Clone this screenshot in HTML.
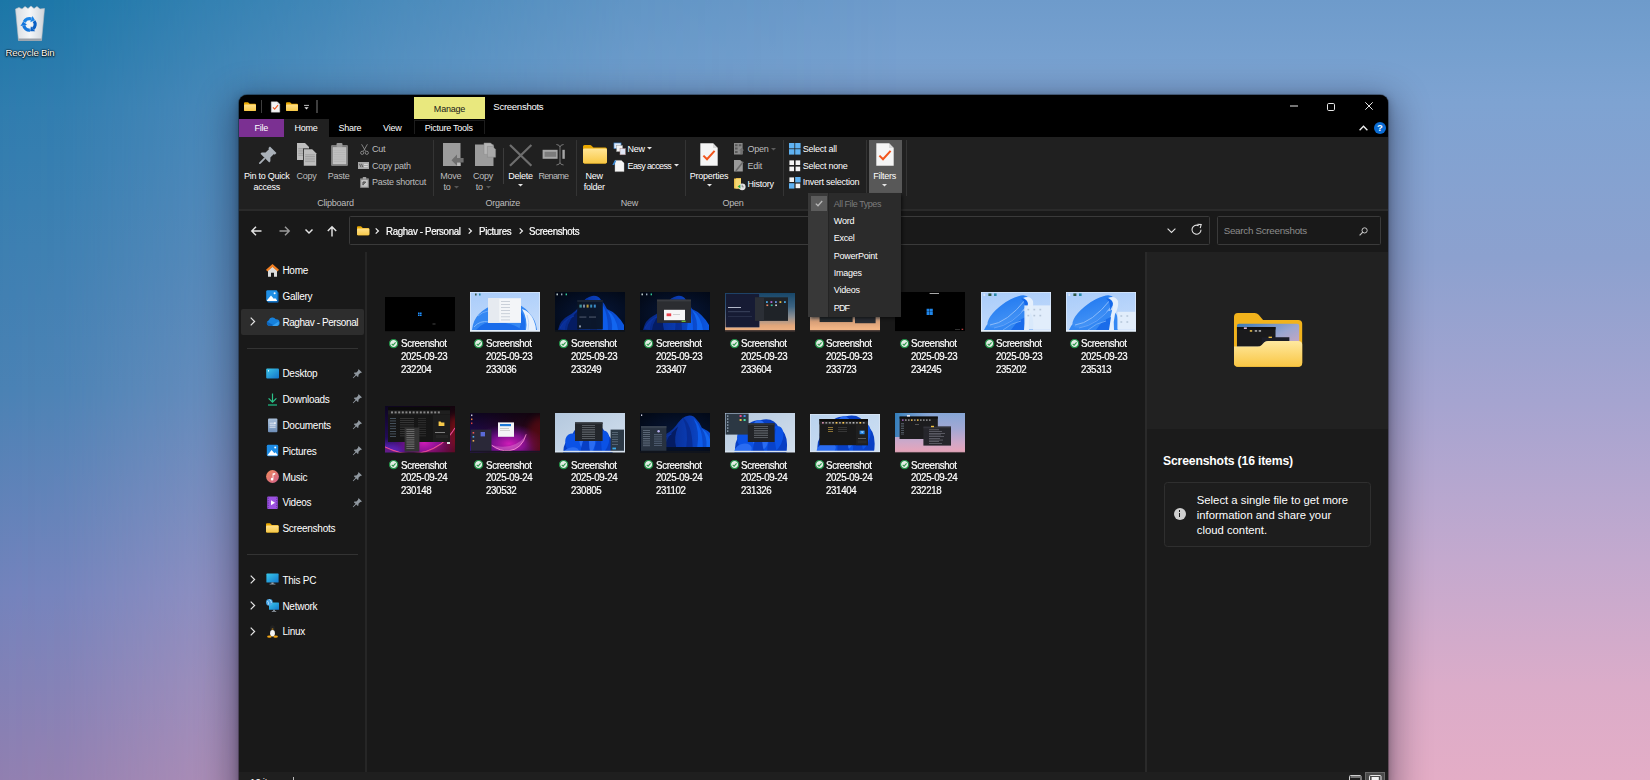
<!DOCTYPE html><html><head><meta charset="utf-8"><title>Screenshots</title><style>
*{margin:0;padding:0;box-sizing:border-box}
html,body{width:1650px;height:780px;overflow:hidden}
body{position:relative;font-family:"Liberation Sans",sans-serif;color:#fff;
 background:linear-gradient(180deg,#6e9bcb 0%,#76a0cf 7%,#7ea3d2 13%,#8ca1cf 33%,#a6a4d0 52%,#c4a9ce 72%,#dbacc9 88%,#e4adc6 100%);
}
.abs,.t{position:absolute}
.t{white-space:nowrap;line-height:12px;margin-top:-6px;font-size:9px;letter-spacing:-.25px;color:#fff}
.c{transform:translateX(-50%);text-align:center}
.g{color:#bdbdbd}
.n{font-size:9.8px;letter-spacing:-.28px}
.np{font-size:10px;letter-spacing:-.25px}
.cap{font-size:11px;letter-spacing:-.4px;margin-top:-6.2px;transform:scaleX(.885);transform-origin:0 50%;-webkit-text-stroke:.22px #fff}
svg{position:absolute;overflow:visible}
#lov{position:absolute;left:0;top:0;width:900px;height:780px;background:linear-gradient(180deg,#1b76a7 0,#2f7cae 14%,#4a82b4 50%,#7383bc 76%,#917fb0 100%);-webkit-mask-image:linear-gradient(90deg,#000 0,rgba(0,0,0,.96) 7%,rgba(0,0,0,.72) 22%,rgba(0,0,0,.42) 45%,rgba(0,0,0,.15) 70%,transparent 100%);mask-image:linear-gradient(90deg,#000 0,rgba(0,0,0,.96) 7%,rgba(0,0,0,.72) 22%,rgba(0,0,0,.42) 45%,rgba(0,0,0,.15) 70%,transparent 100%)}
#win{position:absolute;left:239px;top:95px;width:1149px;height:700px;background:#191919;border-radius:8px 8px 0 0;
 box-shadow:0 0 0 1px rgba(0,0,0,.3),0 10px 34px 8px rgba(0,0,25,.36),0 2px 10px rgba(0,0,0,.3)}
</style></head><body>
<div id="lov"></div>
<svg style="left:14px;top:5px" width="32" height="37" viewBox="0 0 32 37">
<defs><linearGradient id="rb" x1="0" x2="1"><stop offset="0" stop-color="#d9dde2"/><stop offset=".5" stop-color="#f4f6f8"/><stop offset="1" stop-color="#cfd4da"/></linearGradient></defs>
<path d="M1.5 4 L5 2.5 L8 4 L11 1.5 L14 3.5 L17 1 L20 3.5 L23 1.5 L26 4 L30.5 3.5 L27.5 35.5 L4.5 35.5 Z" fill="url(#rb)" stroke="#b9bec5" stroke-width=".6"/>
<path d="M4.3 33.5 L27.7 33.5 L27.5 35.8 L4.5 35.8 Z" fill="#9aa0a8"/>
<g transform="translate(15.4 19.4)"><g transform="rotate(10)"><path d="M-5.51 -1.48 A5.70 5.70 0 0 1 0.99 -5.61" fill="none" stroke="#1b84e6" stroke-width="3.3"/><path d="M1.56 -8.86 L0.42 -2.36 L4.83 -4.94 Z" fill="#1b84e6"/></g><g transform="rotate(130)"><path d="M-5.51 -1.48 A5.70 5.70 0 0 1 0.99 -5.61" fill="none" stroke="#0a5fc4" stroke-width="3.3"/><path d="M1.56 -8.86 L0.42 -2.36 L4.83 -4.94 Z" fill="#0a5fc4"/></g><g transform="rotate(250)"><path d="M-5.51 -1.48 A5.70 5.70 0 0 1 0.99 -5.61" fill="none" stroke="#1476dc" stroke-width="3.3"/><path d="M1.56 -8.86 L0.42 -2.36 L4.83 -4.94 Z" fill="#1476dc"/></g></g>
</svg>
<div class="t" style="left:5.5px;top:52.5px;font-size:9.6px;letter-spacing:-.15px;text-shadow:0 1px 2px #000,0 0 2px #000,0 0 1px #000">Recycle Bin</div>
<div id="win"></div>
<div class="abs" style="left:239px;top:95px;width:1149px;height:42px;background:#000;border-radius:8px 8px 0 0"></div>
<svg style="left:244px;top:102px" width="12" height="9" viewBox="0 0 12 9"><defs><linearGradient id="fga" x1="0" y1="0" x2="0" y2="1"><stop offset="0" stop-color="#ffe08a"/><stop offset="1" stop-color="#f7c948"/></linearGradient></defs>
<path d="M0 1.2 Q0 .2 1 .2 L3.6 .2 Q4.2 .2 4.7 .8 L5.6 1.8 L11 1.8 Q12 1.8 12 2.8 L12 8 Q12 9 11 9 L1 9 Q0 9 0 8 Z" fill="#e9a800"/>
<path d="M0 3.2 Q0 2.4 1 2.4 L11 2.4 Q12 2.4 12 3.2 L12 8 Q12 9 11 9 L1 9 Q0 9 0 8 Z" fill="url(#fga)"/></svg>
<div class="abs" style="left:260.6px;top:100px;width:1.6px;height:13px;background:#3e3e3e;"></div>
<svg style="left:270.8px;top:101px" width="9" height="12" viewBox="0 0 10 12"><path d="M.3 .3 L7 .3 L9.7 3 L9.7 11.7 L.3 11.7 Z" fill="#f3f3f3" stroke="#cfcfcf" stroke-width=".5"/><path d="M7 .3 L7 3 L9.7 3 Z" fill="#d6d6d6"/><path d="M2.2 6.4 L4.1 8.3 L7.8 3.9" fill="none" stroke="#ee5a24" stroke-width="1.3"/></svg>
<svg style="left:286px;top:102px" width="12" height="9" viewBox="0 0 12 9"><defs><linearGradient id="fgb" x1="0" y1="0" x2="0" y2="1"><stop offset="0" stop-color="#ffe08a"/><stop offset="1" stop-color="#f7c948"/></linearGradient></defs>
<path d="M0 1.2 Q0 .2 1 .2 L3.6 .2 Q4.2 .2 4.7 .8 L5.6 1.8 L11 1.8 Q12 1.8 12 2.8 L12 8 Q12 9 11 9 L1 9 Q0 9 0 8 Z" fill="#e9a800"/>
<path d="M0 3.2 Q0 2.4 1 2.4 L11 2.4 Q12 2.4 12 3.2 L12 8 Q12 9 11 9 L1 9 Q0 9 0 8 Z" fill="url(#fgb)"/></svg>
<svg style="left:303.5px;top:104.5px" width="5" height="5" viewBox="0 0 5 5"><path d="M0 .4 H5" stroke="#d0d0d0" stroke-width=".9"/><path d="M.4 2.3 H4.6 L2.5 4.6 Z" fill="#e6e6e6"/></svg>
<div class="abs" style="left:316.2px;top:100px;width:1.6px;height:13px;background:#3e3e3e;"></div>
<div class="abs" style="left:414px;top:97px;width:71px;height:22px;background:#e9e87e;"></div>
<div class="t c" style="left:449.5px;top:108.8px;color:#1a1a1a;font-size:9px;letter-spacing:-.2px">Manage</div>
<div class="t" style="left:493.3px;top:107.3px;font-size:9.6px;letter-spacing:-.3px">Screenshots</div>
<div class="abs" style="left:239px;top:119px;width:45px;height:18px;background:#7b3092;"></div>
<div class="abs" style="left:284px;top:119px;width:44.5px;height:18px;background:#202020;"></div>
<div class="abs" style="left:414px;top:119.5px;width:71px;height:14.5px;background:#000;border:1px solid #1d1d1d;border-bottom:none"></div>
<div class="t c" style="left:261.3px;top:127.8px;">File</div>
<div class="t c" style="left:306px;top:127.8px;">Home</div>
<div class="t c" style="left:350px;top:127.8px;">Share</div>
<div class="t c" style="left:392.3px;top:127.8px;">View</div>
<div class="t c" style="left:448.7px;top:127.8px;">Picture Tools</div>
<svg style="left:1289.5px;top:102px" width="8" height="8" viewBox="0 0 8 8"><path d="M0 4 H8" stroke="#e8e8e8" stroke-width="1"/></svg>
<svg style="left:1327px;top:102.6px" width="8" height="8" viewBox="0 0 8 8"><rect x=".5" y=".5" width="7" height="7" rx="1.2" fill="none" stroke="#e8e8e8" stroke-width="1"/></svg>
<svg style="left:1364.6px;top:102.4px" width="8" height="8" viewBox="0 0 8 8"><path d="M.3 .3 L7.7 7.7 M7.7 .3 L.3 7.7" stroke="#e8e8e8" stroke-width="1"/></svg>
<svg style="left:1358.5px;top:125.3px" width="9" height="6" viewBox="0 0 9 6"><path d="M.6 5.2 L4.5 1.2 L8.4 5.2" fill="none" stroke="#f0f0f0" stroke-width="1.3"/></svg>
<div class="abs" style="left:1374px;top:122px;width:12px;height:12px;border-radius:50%;background:#0b6cd4"></div>
<div class="t c" style="left:1380px;top:128.2px;font-size:9.5px;font-weight:bold;letter-spacing:0">?</div>
<div class="abs" style="left:239px;top:137px;width:1149px;height:72px;background:#202020;"></div>
<div class="abs" style="left:239px;top:209px;width:1149px;height:1.8px;background:#2a2a2a;"></div>
<div class="abs" style="left:432.5px;top:139.5px;width:1px;height:56px;background:#343434;"></div>
<div class="abs" style="left:575.5px;top:139.5px;width:1px;height:56px;background:#343434;"></div>
<div class="abs" style="left:685px;top:139.5px;width:1px;height:56px;background:#343434;"></div>
<div class="abs" style="left:783px;top:139.5px;width:1px;height:56px;background:#343434;"></div>
<div class="abs" style="left:866px;top:139.5px;width:1px;height:56px;background:#343434;"></div>
<div class="abs" style="left:906px;top:139.5px;width:1px;height:56px;background:#343434;"></div>
<div class="abs" style="left:502.5px;top:148px;width:1px;height:36px;background:#3c3c3c;"></div>
<div class="t c" style="left:335.5px;top:203px;color:#bdbdbd">Clipboard</div>
<div class="t c" style="left:502.7px;top:203px;color:#bdbdbd">Organize</div>
<div class="t c" style="left:629.4px;top:203px;color:#bdbdbd">New</div>
<div class="t c" style="left:733px;top:203px;color:#bdbdbd">Open</div>
<svg style="left:257.5px;top:146.5px" width="18" height="18" viewBox="0 0 18 18"><g transform="rotate(45 9 9)"><path d="M4.4 .2 H13.6 V2.6 H12.4 V7.6 L15.2 10.4 V12 H2.8 V10.4 L5.6 7.6 V2.6 H4.4 Z" fill="#aab1b9"/><path d="M8.1 12 H9.9 V19 L9 20.4 L8.1 19 Z" fill="#aab1b9"/></g></svg>
<div class="t c" style="left:266.7px;top:176px;">Pin to Quick</div>
<div class="t c" style="left:266.7px;top:187px;">access</div>
<svg style="left:297px;top:143.3px" width="20" height="23" viewBox="0 0 20 23"><path d="M0 0 h8 l4 4 v13 h-12 z" fill="#bdbdbd"/><path d="M1.3 5.5 h9.4" stroke="#8d8d8d" stroke-width=".6"/><path d="M1.3 7.2 h9.4" stroke="#8d8d8d" stroke-width=".6"/><path d="M1.3 8.9 h9.4" stroke="#8d8d8d" stroke-width=".6"/><path d="M1.3 10.6 h9.4" stroke="#8d8d8d" stroke-width=".6"/><path d="M1.3 12.3 h9.4" stroke="#8d8d8d" stroke-width=".6"/><path d="M6 5.5 h9 l4 4 v13.5 h-13 z" fill="#202020"/><path d="M6.8 6.3 h8.4 l4 4 v12.4 h-12.4 z" fill="#bdbdbd"/><path d="M8.1 11.8 h9.8" stroke="#8d8d8d" stroke-width=".6"/><path d="M8.1 13.5 h9.8" stroke="#8d8d8d" stroke-width=".6"/><path d="M8.1 15.2 h9.8" stroke="#8d8d8d" stroke-width=".6"/><path d="M8.1 16.9 h9.8" stroke="#8d8d8d" stroke-width=".6"/><path d="M8.1 18.6 h9.8" stroke="#8d8d8d" stroke-width=".6"/></svg>
<div class="t c g" style="left:306.5px;top:176px;">Copy</div>
<svg style="left:330.7px;top:143.3px" width="17" height="23" viewBox="0 0 17 23"><rect x="0" y="2" width="17" height="21" rx="1.2" fill="#7d7d7d"/><rect x="5.5" y="0" width="6" height="4" rx="1" fill="#9a9a9a"/><rect x="1.8" y="4.2" width="13.4" height="17" fill="#c2c2c2"/><path d="M2.6 6 h11.8" stroke="#a9a9a9" stroke-width=".5"/><path d="M2.6 7.8 h11.8" stroke="#a9a9a9" stroke-width=".5"/><path d="M2.6 9.6 h11.8" stroke="#a9a9a9" stroke-width=".5"/><path d="M2.6 11.4 h11.8" stroke="#a9a9a9" stroke-width=".5"/><path d="M2.6 13.2 h11.8" stroke="#a9a9a9" stroke-width=".5"/><path d="M2.6 15 h11.8" stroke="#a9a9a9" stroke-width=".5"/><path d="M2.6 16.8 h11.8" stroke="#a9a9a9" stroke-width=".5"/><path d="M2.6 18.6 h11.8" stroke="#a9a9a9" stroke-width=".5"/></svg>
<div class="t c g" style="left:338.6px;top:176px;">Paste</div>
<svg style="left:359.5px;top:143.5px" width="9" height="11" viewBox="0 0 9 11"><path d="M1.6 .3 L5.6 7.2 M7.4 .3 L3.4 7.2" stroke="#9a9a9a" stroke-width=".8" fill="none"/><circle cx="2.2" cy="8.8" r="1.6" fill="none" stroke="#9a9a9a" stroke-width=".8"/><circle cx="6.8" cy="8.8" r="1.6" fill="none" stroke="#9a9a9a" stroke-width=".8"/></svg>
<div class="t g" style="left:372px;top:148.7px;">Cut</div>
<svg style="left:358px;top:162.3px" width="11" height="7" viewBox="0 0 11 7"><rect width="11" height="7" fill="#a8a8a8"/><path d="M1.5 1.8 L3 5.2 M3.4 1.8 L4.9 5.2" stroke="#3a3a3a" stroke-width=".7"/><path d="M6 2.4 H9.8 M6 4.6 H9.8" stroke="#e8e8e8" stroke-width=".8"/></svg>
<div class="t g" style="left:372px;top:165.7px;">Copy path</div>
<svg style="left:359.5px;top:176.5px" width="9" height="11" viewBox="0 0 9 11"><rect x="0" y="1.2" width="9" height="9.8" rx=".8" fill="#7f7f7f"/><rect x="2.8" y="0" width="3.4" height="2.4" rx=".6" fill="#a0a0a0"/><rect x="1.2" y="2.8" width="6.6" height="7" fill="#c4c4c4"/><path d="M3 8.2 V5 H5.6 M5.6 5 L3.2 7.6" stroke="#333" stroke-width=".9" fill="none"/></svg>
<div class="t g" style="left:372px;top:182.4px;">Paste shortcut</div>
<svg style="left:442.7px;top:143.3px" width="21" height="23" viewBox="0 0 21 23"><rect x="0" y="0" width="17.5" height="23" fill="#9c9c9c"/><path d="M8.5 17.2 L14 11.6 V15 H20.6 V19.6 H14 V22.8 Z" fill="#6f6f6f"/><rect x="14.2" y="19.8" width="3.3" height="3.2" fill="#bdbdbd"/></svg>
<div class="t c g" style="left:450.8px;top:176px;">Move</div>
<div class="t c g" style="left:447px;top:187px;">to</div>
<svg style="left:453.5px;top:185.8px" width="5" height="3" viewBox="0 0 5 3"><path d="M0 0 H5 L2.5 2.6 Z" fill="#555"/></svg>
<svg style="left:474.8px;top:143.3px" width="21" height="23" viewBox="0 0 21 23"><rect x="0" y="1.5" width="18.5" height="21.5" fill="#9c9c9c"/><path d="M9 0 h6.6 l3 3 v8.4 h-9.6 z" fill="#b5b5b5" stroke="#8a8a8a" stroke-width=".5"/><path d="M12.4 3.4 h5.2 l3 3 v7.8 h-8.2 z" fill="#a9a9a9" stroke="#858585" stroke-width=".5"/></svg>
<div class="t c g" style="left:483px;top:176px;">Copy</div>
<div class="t c g" style="left:479.3px;top:187px;">to</div>
<svg style="left:485.8px;top:185.8px" width="5" height="3" viewBox="0 0 5 3"><path d="M0 0 H5 L2.5 2.6 Z" fill="#555"/></svg>
<svg style="left:509.4px;top:143.5px" width="23.4" height="22.8" viewBox="0 0 23.4 22.8"><path d="M1 1 L22.4 21.8 M22.4 1 L1 21.8" stroke="#6e6e6e" stroke-width="2.2" fill="none"/></svg>
<div class="t c" style="left:520.5px;top:176px;">Delete</div>
<svg style="left:518px;top:184.2px" width="5" height="3" viewBox="0 0 5 3"><path d="M0 0 H5 L2.5 2.6 Z" fill="#e6e6e6"/></svg>
<svg style="left:541.8px;top:144px" width="23.4" height="21.5" viewBox="0 0 23.4 21.5"><rect x=".6" y="5.8" width="22.2" height="9" fill="#a6a6a6"/><rect x="2.6" y="7.8" width="11.6" height="5" fill="#7b7b7b"/><rect x="15.6" y="3" width="4.8" height="15" fill="#202020"/><path d="M14.4 .5 Q17.6 .7 18 3 V18.5 Q17.6 20.8 14.4 21 M21.6 .5 Q18.4 .7 18 3 M18 18.5 Q18.4 20.8 21.6 21" fill="none" stroke="#8c8c8c" stroke-width=".8"/></svg>
<div class="t c g" style="left:553.4px;top:176px;letter-spacing:-.7px">Rename</div>
<svg style="left:582.7px;top:145px" width="24" height="18.4" viewBox="0 0 24 18.4"><defs><linearGradient id="nf" x1="0" y1="0" x2="0" y2="1"><stop offset="0" stop-color="#ffe596"/><stop offset="1" stop-color="#f8c844"/></linearGradient></defs>
<path d="M0 1.6 Q0 0 1.6 0 L7 0 Q8 0 8.8 .9 L10.4 2.6 L22.4 2.6 Q24 2.6 24 4.2 L24 16.8 Q24 18.4 22.4 18.4 L1.6 18.4 Q0 18.4 0 16.8 Z" fill="#eaa700"/>
<path d="M0 5 Q0 3.6 1.6 3.6 L22.4 3.6 Q24 3.6 24 5 L24 16.8 Q24 18.4 22.4 18.4 L1.6 18.4 Q0 18.4 0 16.8 Z" fill="url(#nf)"/></svg>
<div class="t c" style="left:594.2px;top:176px;">New</div>
<div class="t c" style="left:594.2px;top:187px;">folder</div>
<svg style="left:613.6px;top:142.6px" width="12" height="12" viewBox="0 0 12 12"><rect x="0" y="0" width="7" height="5.4" fill="#dfe9f5" stroke="#4a90d9" stroke-width=".7"/><rect x="2.6" y="2.6" width="6" height="6" fill="#f4f4f4" stroke="#9a9a9a" stroke-width=".5"/><rect x="6" y="5.6" width="5.4" height="6.2" fill="#dfe6f4" stroke="#a88" stroke-width=".5"/></svg>
<div class="t" style="left:627.6px;top:148.7px;">New</div>
<svg style="left:646.8px;top:147.2px" width="5" height="3" viewBox="0 0 5 3"><path d="M0 0 H5 L2.5 2.6 Z" fill="#e6e6e6"/></svg>
<svg style="left:613.2px;top:159.5px" width="12" height="12" viewBox="0 0 12 12"><path d="M2 .4 h6.4 l2.6 2.6 v8.6 h-9 z" fill="#f6f6f6" stroke="#c8c8c8" stroke-width=".4"/><path d="M1.6 .6 L3.4 .6 L1.2 5 L-.6 5 Z" fill="#3a8bd8"/></svg>
<div class="t" style="left:627.6px;top:165.7px;letter-spacing:-.63px">Easy access</div>
<svg style="left:674.2px;top:164.2px" width="5" height="3" viewBox="0 0 5 3"><path d="M0 0 H5 L2.5 2.6 Z" fill="#e6e6e6"/></svg>
<svg style="left:700.3px;top:143.3px" width="18" height="23" viewBox="0 0 18 23"><path d="M.3 .3 H13 L17.7 5 V22.7 H.3 Z" fill="#f5f5f5"/><path d="M13 .3 V5 H17.7 Z" fill="#d9d9d9"/><path d="M3.4 12.6 L7 16.2 L14.6 7.8" fill="none" stroke="#f2541b" stroke-width="2"/></svg>
<div class="t c" style="left:709px;top:176px;">Properties</div>
<svg style="left:706.6px;top:184.2px" width="5" height="3" viewBox="0 0 5 3"><path d="M0 0 H5 L2.5 2.6 Z" fill="#e6e6e6"/></svg>
<svg style="left:734px;top:143.2px" width="10" height="11.5" viewBox="0 0 10 11.5"><rect x="0" y="0" width="8.6" height="11.5" fill="#8a8a8a"/><path d="M1 1.2 h2.6 v2 h-2.6z M1 4.6 h2.6 v2 h-2.6z M1 8 h2.6 v2 h-2.6z M4.8 1.2 h2.6 v2 h-2.6z" fill="#5a5a5a"/><path d="M6.4 11 V7.6 H5 L7.6 4.8 L10.2 7.6 H8.8 V11 Z" fill="#707070"/></svg>
<div class="t g" style="left:747.6px;top:149px;color:#bdbdbd">Open</div>
<svg style="left:771.4px;top:147.6px" width="5" height="3" viewBox="0 0 5 3"><path d="M0 0 H5 L2.5 2.6 Z" fill="#5c5c5c"/></svg>
<svg style="left:734px;top:160.2px" width="10" height="11.5" viewBox="0 0 10 11.5"><path d="M0 0 H6.2 L8.8 2.6 V11.5 H0 Z" fill="#9a9a9a"/><path d="M1.2 10.4 L8.6 1.2 L9.8 2.2 L2.6 11.2 Z" fill="#6b6b6b"/></svg>
<div class="t g" style="left:747.6px;top:166.2px;color:#bdbdbd">Edit</div>
<svg style="left:734px;top:177.5px" width="12" height="12.5" viewBox="0 0 12 12.5"><path d="M0 .4 H1.6 L2.4 0 H7 V10.6 H0 Z" fill="#e9bd4a"/><path d="M1.4 1 H7 V10.6 H1.4 Z" fill="#f6d772"/><circle cx="8.2" cy="8.8" r="3.4" fill="#e4e4e4"/><path d="M8.2 6.8 V8.9 H9.8" stroke="#666" stroke-width=".7" fill="none"/><path d="M3.6 8.6 L6.4 6.6 V10.6 Z" fill="#2aa33a"/></svg>
<div class="t" style="left:747.6px;top:183.6px;">History</div>
<svg style="left:788.5px;top:142.8px" width="11.6" height="11.6" viewBox="0 0 11.6 11.6"><rect x="0" y="0" width="5.4" height="5.4" fill="#5fb2f2"/><rect x="6.2" y="0" width="5.4" height="5.4" fill="#5fb2f2"/><rect x="0" y="6.2" width="5.4" height="5.4" fill="#5fb2f2"/><rect x="6.2" y="6.2" width="5.4" height="5.4" fill="#5fb2f2"/></svg>
<div class="t" style="left:802.7px;top:148.7px;">Select all</div>
<svg style="left:788.5px;top:159.8px" width="11.6" height="11.6" viewBox="0 0 11.6 11.6"><rect x="0.4" y="0.4" width="4.6" height="4.6" fill="#f2f2f2"/><rect x="6.6" y="0.4" width="4.6" height="4.6" fill="#f2f2f2"/><rect x="0.4" y="6.6" width="4.6" height="4.6" fill="#f2f2f2"/><rect x="6.6" y="6.6" width="4.6" height="4.6" fill="#f2f2f2"/></svg>
<div class="t" style="left:802.7px;top:165.7px;">Select none</div>
<svg style="left:788.5px;top:176.6px" width="11.6" height="11.6" viewBox="0 0 11.6 11.6"><rect x="0.4" y="0.4" width="4.6" height="4.6" fill="#f2f2f2"/><rect x="6.2" y="0" width="5.4" height="5.4" fill="#5fb2f2"/><rect x="0" y="6.2" width="5.4" height="5.4" fill="#5fb2f2"/><rect x="6.6" y="6.6" width="4.6" height="4.6" fill="#f2f2f2"/></svg>
<div class="t" style="left:802.7px;top:182.4px;">Invert selection</div>
<div class="abs" style="left:869px;top:140px;width:32.5px;height:53px;background:#585858;"></div>
<svg style="left:876.4px;top:143.3px" width="18" height="23" viewBox="0 0 18 23"><path d="M.3 .3 H13 L17.7 5 V22.7 H.3 Z" fill="#f5f5f5"/><path d="M13 .3 V5 H17.7 Z" fill="#d9d9d9"/><path d="M3.4 12.6 L7 16.2 L14.6 7.8" fill="none" stroke="#f2541b" stroke-width="2"/></svg>
<div class="t c" style="left:884.6px;top:176px;">Filters</div>
<svg style="left:882px;top:184.2px" width="5" height="3" viewBox="0 0 5 3"><path d="M0 0 H5 L2.5 2.6 Z" fill="#e6e6e6"/></svg>
<div class="abs" style="left:239px;top:211px;width:1149px;height:41px;background:#191919;"></div>
<svg style="left:250.5px;top:226px" width="11" height="10" viewBox="0 0 11 10"><path d="M10.5 5 H1 M5 .8 L.8 5 L5 9.2" fill="none" stroke="#e4e4e4" stroke-width="1.45"/></svg>
<svg style="left:278.5px;top:226px" width="11" height="10" viewBox="0 0 11 10"><path d="M.5 5 H10 M6 .8 L10.2 5 L6 9.2" fill="none" stroke="#9a9a9a" stroke-width="1.45"/></svg>
<svg style="left:305px;top:228.5px" width="8" height="5" viewBox="0 0 8 5"><path d="M.5 .5 L4 4 L7.5 .5" fill="none" stroke="#e4e4e4" stroke-width="1.45"/></svg>
<svg style="left:327.3px;top:225.5px" width="10" height="11" viewBox="0 0 10 11"><path d="M5 10.5 V1 M.8 5 L5 .8 L9.2 5" fill="none" stroke="#e4e4e4" stroke-width="1.45"/></svg>
<div class="abs" style="left:349.2px;top:216.2px;width:860.7px;height:29.2px;border:1.4px solid #3a3a3a;border-radius:1.5px;background:#191919"></div>
<svg style="left:356.8px;top:225.6px" width="12.3" height="9.5" viewBox="0 0 12 9"><defs><linearGradient id="fgc" x1="0" y1="0" x2="0" y2="1"><stop offset="0" stop-color="#ffe08a"/><stop offset="1" stop-color="#f7c948"/></linearGradient></defs>
<path d="M0 1.2 Q0 .2 1 .2 L3.6 .2 Q4.2 .2 4.7 .8 L5.6 1.8 L11 1.8 Q12 1.8 12 2.8 L12 8 Q12 9 11 9 L1 9 Q0 9 0 8 Z" fill="#e9a800"/>
<path d="M0 3.2 Q0 2.4 1 2.4 L11 2.4 Q12 2.4 12 3.2 L12 8 Q12 9 11 9 L1 9 Q0 9 0 8 Z" fill="url(#fgc)"/></svg>
<svg style="left:375px;top:227.7px" width="4" height="6" viewBox="0 0 4 6"><path d="M.7 .4 L3.4 3 L.7 5.6" fill="none" stroke="#f0f0f0" stroke-width="1.25"/></svg>
<div class="t cap" style="left:385.7px;top:230.9px;">Raghav - Personal</div>
<svg style="left:468.3px;top:227.7px" width="4" height="6" viewBox="0 0 4 6"><path d="M.7 .4 L3.4 3 L.7 5.6" fill="none" stroke="#f0f0f0" stroke-width="1.25"/></svg>
<div class="t cap" style="left:479.3px;top:230.9px;">Pictures</div>
<svg style="left:519.3px;top:227.7px" width="4" height="6" viewBox="0 0 4 6"><path d="M.7 .4 L3.4 3 L.7 5.6" fill="none" stroke="#f0f0f0" stroke-width="1.25"/></svg>
<div class="t cap" style="left:529.3px;top:230.9px;">Screenshots</div>
<svg style="left:1166.5px;top:227.5px" width="9" height="5.5" viewBox="0 0 9 5.5"><path d="M.6 .6 L4.5 4.5 L8.4 .6" fill="none" stroke="#e0e0e0" stroke-width="1.1"/></svg>
<svg style="left:1190.5px;top:223.5px" width="11" height="11" viewBox="0 0 11 11"><path d="M10 5.7 A4.5 4.5 0 1 1 7.6 1.7" fill="none" stroke="#e0e0e0" stroke-width="1.1"/><path d="M6.4 .2 L10.2 .6 L9.2 4.2" fill="none" stroke="#e0e0e0" stroke-width="1.1"/></svg>
<div class="abs" style="left:1216.8px;top:216.2px;width:164.4px;height:29.2px;border:1.4px solid #3a3a3a;border-radius:1.5px;background:#191919"></div>
<div class="t n" style="left:1223.7px;top:231px;color:#8c8c8c">Search Screenshots</div>
<svg style="left:1359px;top:227px" width="9" height="9" viewBox="0 0 9 9"><circle cx="5.6" cy="3.4" r="2.6" fill="none" stroke="#c8c8c8" stroke-width="1"/><path d="M3.8 5.2 L.6 8.4" stroke="#c8c8c8" stroke-width="1.2"/></svg>
<div class="abs" style="left:365.2px;top:252px;width:1.8px;height:520px;background:#262626;"></div>
<div class="abs" style="left:241px;top:309px;width:123px;height:25.6px;background:#2d2d2d;border-radius:2px"></div>
<div class="abs" style="left:247px;top:347.5px;width:111px;height:1px;background:#333;"></div>
<div class="abs" style="left:247px;top:554.3px;width:111px;height:1px;background:#333;"></div>
<svg style="left:266.2px;top:263.8px" width="13" height="13" viewBox="0 0 13 13"><path d="M2 6.2 L6.5 2.4 L11 6.2 V12.8 H8 V8.8 H5 V12.8 H2 Z" fill="#dcdcdc"/><path d="M6.5 0 L13 5.8 L11.6 7.6 L6.5 3 L1.4 7.6 L0 5.8 Z" fill="#f27f22"/></svg>
<div class="t np" style="left:282.4px;top:271.3px;">Home</div>
<svg style="left:266.2px;top:289.8px" width="13" height="13" viewBox="0 0 13 13"><rect x="1.6" y="1.8" width="11" height="11" rx="1.4" fill="#0f5fa8"/><rect x=".2" y=".2" width="11.2" height="11.2" rx="1.4" fill="#1f8fe6"/><path d="M1 10.2 L5 5.6 L8 9 L9 8 L11 10.2 V11 H1 Z" fill="#fff"/><circle cx="8.6" cy="3.2" r="1" fill="#fff"/></svg>
<div class="t np" style="left:282.4px;top:297.3px;">Gallery</div>
<svg style="left:266.2px;top:315.1px" width="13" height="13" viewBox="0 0 13 13"><path d="M3.2 11 A3 3 0 0 1 2.8 5.2 A4 4 0 0 1 9.8 4.2 A3.4 3.4 0 0 1 10.6 11 Z" fill="#1681dc"/><path d="M3.2 11 A3 3 0 0 1 1.2 6.8 L9 11 Z" fill="#0e63b8"/><path d="M6 11 L12.6 6.4 A3.4 3.4 0 0 1 10.6 11 Z" fill="#34a0f0"/></svg>
<div class="t np" style="left:282.4px;top:322.6px;letter-spacing:-.42px">Raghav - Personal</div>
<svg style="left:249.6px;top:317.3px" width="5.4" height="9" viewBox="0 0 5.4 9"><path d="M.7 .6 L4.6 4.5 L.7 8.4" fill="none" stroke="#e6e6e6" stroke-width="1.2"/></svg>
<svg style="left:266.2px;top:366.8px" width="13" height="13" viewBox="0 0 13 13"><defs><linearGradient id="dk" x1="0" y1="0" x2="1" y2="1"><stop offset="0" stop-color="#3cc7e8"/><stop offset="1" stop-color="#1272c8"/></linearGradient></defs><rect x=".2" y="1.4" width="12.8" height="10" rx="1" fill="url(#dk)"/><rect x="2" y="3" width=".9" height="1.6" fill="#e8f8ff"/></svg>
<div class="t np" style="left:282.4px;top:374.3px;">Desktop</div>
<svg style="left:351.8px;top:368.5px" width="10" height="10" viewBox="0 0 10 10"><g transform="rotate(45 5 5)"><path d="M2.8 .4 H7.2 V1.6 H6.5 V4.4 L7.8 5.8 V6.6 H2.2 V5.8 L3.5 4.4 V1.6 H2.8 Z M4.6 6.6 H5.4 V10.6 H4.6 Z" fill="#9098a0"/></g></svg>
<svg style="left:266.2px;top:392.7px" width="13" height="13" viewBox="0 0 13 13"><path d="M6.5 .6 V9 M2.6 5.4 L6.5 9.2 L10.4 5.4" fill="none" stroke="#2bc48a" stroke-width="1.2"/><path d="M2 12 H11" stroke="#1ea878" stroke-width="1.4"/></svg>
<div class="t np" style="left:282.4px;top:400.2px;">Downloads</div>
<svg style="left:351.8px;top:394.4px" width="10" height="10" viewBox="0 0 10 10"><g transform="rotate(45 5 5)"><path d="M2.8 .4 H7.2 V1.6 H6.5 V4.4 L7.8 5.8 V6.6 H2.2 V5.8 L3.5 4.4 V1.6 H2.8 Z M4.6 6.6 H5.4 V10.6 H4.6 Z" fill="#9098a0"/></g></svg>
<svg style="left:266.2px;top:418.5px" width="13" height="13" viewBox="0 0 13 13"><defs><linearGradient id="dc" x1="0" y1="0" x2="0" y2="1"><stop offset="0" stop-color="#a9bfd9"/><stop offset="1" stop-color="#6f8fb8"/></linearGradient></defs><rect x="2" y="-.4" width="9.4" height="13.6" rx="1" fill="url(#dc)"/><path d="M3.6 4.2 H8 M3.6 6.2 H9.6 M3.6 8.2 H9.6" stroke="#e8eef6" stroke-width=".9"/><rect x="8" y="3.4" width="1.8" height="1.4" fill="#fff"/></svg>
<div class="t np" style="left:282.4px;top:426px;">Documents</div>
<svg style="left:351.8px;top:420.2px" width="10" height="10" viewBox="0 0 10 10"><g transform="rotate(45 5 5)"><path d="M2.8 .4 H7.2 V1.6 H6.5 V4.4 L7.8 5.8 V6.6 H2.2 V5.8 L3.5 4.4 V1.6 H2.8 Z M4.6 6.6 H5.4 V10.6 H4.6 Z" fill="#9098a0"/></g></svg>
<svg style="left:266.2px;top:444.3px" width="13" height="13" viewBox="0 0 13 13"><rect x=".8" y=".8" width="11.4" height="11.4" rx="1.4" fill="#1c8be4"/><path d="M1.6 11 L5.6 6 L8.4 9.2 L9.4 8.2 L11.4 10.4 V11.4 H1.6 Z" fill="#fff"/><circle cx="9.2" cy="3.6" r="1" fill="#fff"/></svg>
<div class="t np" style="left:282.4px;top:451.8px;">Pictures</div>
<svg style="left:351.8px;top:446px" width="10" height="10" viewBox="0 0 10 10"><g transform="rotate(45 5 5)"><path d="M2.8 .4 H7.2 V1.6 H6.5 V4.4 L7.8 5.8 V6.6 H2.2 V5.8 L3.5 4.4 V1.6 H2.8 Z M4.6 6.6 H5.4 V10.6 H4.6 Z" fill="#9098a0"/></g></svg>
<svg style="left:266.2px;top:470.1px" width="13" height="13" viewBox="0 0 13 13"><defs><linearGradient id="mu" x1="0" y1="0" x2="1" y2="1"><stop offset="0" stop-color="#f08a5a"/><stop offset="1" stop-color="#d2608c"/></linearGradient></defs><circle cx="6.5" cy="6.5" r="6.4" fill="url(#mu)"/><path d="M6.6 9 V3.6 L9.2 3 V4.4 L7.4 4.9 V9 A1.3 1.3 0 1 1 6.6 8 Z" fill="#fff"/></svg>
<div class="t np" style="left:282.4px;top:477.6px;">Music</div>
<svg style="left:351.8px;top:471.8px" width="10" height="10" viewBox="0 0 10 10"><g transform="rotate(45 5 5)"><path d="M2.8 .4 H7.2 V1.6 H6.5 V4.4 L7.8 5.8 V6.6 H2.2 V5.8 L3.5 4.4 V1.6 H2.8 Z M4.6 6.6 H5.4 V10.6 H4.6 Z" fill="#9098a0"/></g></svg>
<svg style="left:266.2px;top:495.9px" width="13" height="13" viewBox="0 0 13 13"><rect x="1.2" y=".4" width="10.6" height="12.6" rx="1" fill="#9b51e0"/><path d="M5 4.2 L9 6.7 L5 9.2 Z" fill="#fff"/><path d="M2.2 1.6 V12 M10.8 1.6 V12" stroke="#5b2a9a" stroke-width=".9" stroke-dasharray="1.2 1.2"/></svg>
<div class="t np" style="left:282.4px;top:503.4px;">Videos</div>
<svg style="left:351.8px;top:497.6px" width="10" height="10" viewBox="0 0 10 10"><g transform="rotate(45 5 5)"><path d="M2.8 .4 H7.2 V1.6 H6.5 V4.4 L7.8 5.8 V6.6 H2.2 V5.8 L3.5 4.4 V1.6 H2.8 Z M4.6 6.6 H5.4 V10.6 H4.6 Z" fill="#9098a0"/></g></svg>
<svg style="left:266.4px;top:523.2px" width="12.6" height="9.6" viewBox="0 0 12 9"><defs><linearGradient id="fgd" x1="0" y1="0" x2="0" y2="1"><stop offset="0" stop-color="#ffe08a"/><stop offset="1" stop-color="#f7c948"/></linearGradient></defs>
<path d="M0 1.2 Q0 .2 1 .2 L3.6 .2 Q4.2 .2 4.7 .8 L5.6 1.8 L11 1.8 Q12 1.8 12 2.8 L12 8 Q12 9 11 9 L1 9 Q0 9 0 8 Z" fill="#e9a800"/>
<path d="M0 3.2 Q0 2.4 1 2.4 L11 2.4 Q12 2.4 12 3.2 L12 8 Q12 9 11 9 L1 9 Q0 9 0 8 Z" fill="url(#fgd)"/></svg>
<div class="t np" style="left:282.4px;top:529.2px;">Screenshots</div>
<svg style="left:266.2px;top:573px" width="13" height="13" viewBox="0 0 13 13"><defs><linearGradient id="pc" x1="0" y1="0" x2="1" y2="1"><stop offset="0" stop-color="#38c8ea"/><stop offset="1" stop-color="#1478cc"/></linearGradient></defs><rect x=".4" y=".6" width="12.2" height="9" rx=".6" fill="url(#pc)"/><path d="M5.4 9.6 H7.6 V10.8 H9.4 V11.6 H3.6 V10.8 H5.4 Z" fill="#9aa4ae"/></svg>
<div class="t np" style="left:282.4px;top:580.5px;">This PC</div>
<svg style="left:249.6px;top:575.2px" width="5.4" height="9" viewBox="0 0 5.4 9"><path d="M.7 .6 L4.6 4.5 L.7 8.4" fill="none" stroke="#e6e6e6" stroke-width="1.2"/></svg>
<svg style="left:266.2px;top:599px" width="13" height="13" viewBox="0 0 13 13"><defs><linearGradient id="nw" x1="0" y1="0" x2="1" y2="1"><stop offset="0" stop-color="#38c8ea"/><stop offset="1" stop-color="#1478cc"/></linearGradient></defs><rect x="3" y="3.6" width="10" height="7.2" rx=".6" fill="url(#nw)"/><path d="M7.2 10.8 H8.8 V12 H10.2 V12.8 H5.8 V12 H7.2 Z" fill="#9aa4ae"/><circle cx="3.4" cy="3.4" r="3.3" fill="#4aa8e8"/><path d="M1.4 2 Q3 3.4 2.4 5.6 M3.6 .4 Q5.6 2 5.4 4" stroke="#d8f0ff" stroke-width=".7" fill="none"/></svg>
<div class="t np" style="left:282.4px;top:606.5px;">Network</div>
<svg style="left:249.6px;top:601.2px" width="5.4" height="9" viewBox="0 0 5.4 9"><path d="M.7 .6 L4.6 4.5 L.7 8.4" fill="none" stroke="#e6e6e6" stroke-width="1.2"/></svg>
<svg style="left:266.2px;top:624.9px" width="13" height="13" viewBox="0 0 13 13"><ellipse cx="6.5" cy="3.2" rx="2.3" ry="2.9" fill="#222"/><path d="M3.2 11.4 Q2.6 6.4 5 4.4 H8 Q10.4 6.4 9.8 11.4 Z" fill="#1c1c1c"/><ellipse cx="6.5" cy="8.2" rx="2.4" ry="3.3" fill="#f4f4f4"/><ellipse cx="6.5" cy="4" rx="1" ry=".6" fill="#f2a516"/><ellipse cx="3.4" cy="11.6" rx="2.3" ry="1.2" fill="#f2a516"/><ellipse cx="9.6" cy="11.6" rx="2.3" ry="1.2" fill="#f2a516"/></svg>
<div class="t np" style="left:282.4px;top:632.4px;">Linux</div>
<svg style="left:249.6px;top:627.1px" width="5.4" height="9" viewBox="0 0 5.4 9"><path d="M.7 .6 L4.6 4.5 L.7 8.4" fill="none" stroke="#e6e6e6" stroke-width="1.2"/></svg>
<svg style="left:384.8px;top:297.2px" width="70" height="34.4" viewBox="0 0 70 34.4" preserveAspectRatio="none"><defs><clipPath id="cpa"><rect width="70" height="34.4"/></clipPath></defs><g clip-path="url(#cpa)"><g style="filter:blur(.35px)"><rect width="70" height="34.4" fill="#000"/><path d="M33 15.4 h1.6 v1.6 h-1.6 z M35 15.4 h1.6 v1.6 h-1.6 z M33 17.4 h1.6 v1.6 h-1.6 z M35 17.4 h1.6 v1.6 h-1.6 z" fill="#1e8fff"/><rect x="47.5" y="26.6" width="3" height=".8" fill="#555"/></g></g></svg>
<svg style="left:469.9px;top:291.8px" width="70" height="39.8" viewBox="0 0 70 39.8" preserveAspectRatio="none"><defs><clipPath id="cpb"><rect width="70" height="39.8"/></clipPath></defs><g clip-path="url(#cpb)"><g style="filter:blur(.35px)"><defs><linearGradient id="lbgb" x1="0" y1="0" x2=".3" y2="1"><stop offset="0" stop-color="#a9ccfa"/><stop offset="1" stop-color="#c3dbfb"/></linearGradient></defs><rect width="70" height="40" fill="url(#lbgb)"/><path d="M2 38 Q3 28 9 22 Q16 15 26 12 L48 12 Q56 16 60 22 Q66 28 67 38 Z" fill="#3588f3"/><path d="M6 38 Q16 27 30 30 Q44 32 52 38 Z" fill="#1a6cea"/><path d="M4 35 Q10 28 19 30" fill="none" stroke="#86b9fa" stroke-width=".9"/><path d="M8 24 Q12 20 18 19" fill="none" stroke="#74aef9" stroke-width=".9"/><path d="M52 17 Q60 19 64 29 Q66 34 66 38 L56 38 Q58 27 52 17 Z" fill="#e8f1fd"/><path d="M50.5 19 Q56.5 26 55 38 L49 38 Q52.5 28 50.5 19 Z" fill="#1c6eec"/><path d="M58 38 Q60 30 57 23" fill="none" stroke="#bcd6fb" stroke-width="1"/><rect x="18.2" y="6.2" width="32.8" height="24.7" fill="#f3f5f8"/><rect x="18.2" y="6.2" width="11" height="24.7" fill="#e6eaf0"/><rect x="31" y="9" width="9" height=".7" fill="#b8c0cc"/><rect x="31" y="12.1" width="9" height=".7" fill="#b8c0cc"/><rect x="31" y="15.2" width="9" height=".7" fill="#b8c0cc"/><rect x="31" y="18.3" width="9" height=".7" fill="#b8c0cc"/><rect x="31" y="21.4" width="9" height=".7" fill="#b8c0cc"/><rect x="31" y="24.5" width="9" height=".7" fill="#b8c0cc"/><rect x="31" y="27.6" width="9" height=".7" fill="#b8c0cc"/><rect x="0" y="38" width="70" height="1.8" fill="#e6f0fb"/><rect x="5" y="1.5" width="1.6" height="2" fill="#3a5a4a"/><rect x="9" y="1.5" width="1.6" height="2" fill="#2a8aaa"/><rect x=".25" y=".25" width="69.5" height="39.3" fill="none" stroke="#eef4fc" stroke-width=".5"/></g></g></svg>
<svg style="left:555px;top:291.8px" width="70" height="39.8" viewBox="0 0 70 39.8" preserveAspectRatio="none"><defs><clipPath id="cpc"><rect width="70" height="39.8"/></clipPath></defs><g clip-path="url(#cpc)"><g style="filter:blur(.35px)"><defs><radialGradient id="dbgc" cx=".55" cy=".55" r=".75"><stop offset="0" stop-color="#07183c"/><stop offset="1" stop-color="#020814"/></radialGradient><linearGradient id="dptc" x1="0" y1="0" x2="1" y2="0"><stop offset="0" stop-color="#07247c"/><stop offset=".55" stop-color="#0a3cb4"/><stop offset="1" stop-color="#0b57e2"/></linearGradient></defs><rect width="70" height="40" fill="url(#dbgc)"/><g transform="translate(0 0) scale(1)"><path d="M3 38 Q5 28 13 24 Q21 20 26 12 Q31 5 37 4 Q43 3 46 8 Q50 12 52 17 Q62 21 69 33 L69 38 Z" fill="url(#dptc)"/><path d="M12 38 Q13 27 26 16 Q21 28 24 38 Z" fill="#051c62"/><path d="M4 37 Q8 28 15 25 Q10 31 10 38 Z" fill="#0a2f96"/><path d="M31 6 Q41 12 42 38 H35 Q38 20 31 6 Z" fill="#082c92" opacity=".9"/><path d="M43 7 Q53 16 53 38 H47 Q50 20 43 7 Z" fill="#0d5cea"/><path d="M52 18 Q61 24 63 38 H57 Q58 27 52 18 Z" fill="#1266f0"/><path d="M5 36 Q10 27 19 24" fill="none" stroke="#0a34a4" stroke-width="1"/></g><rect x="22.2" y="8" width="25.6" height="29.4" fill="#0c1524" opacity=".94"/><rect x="22.2" y="8" width="25.6" height="2" fill="#1a2434"/><rect x="24.4" y="12.6" width="2.4" height="3" fill="#3f8f9a"/><rect x="28" y="12.6" width="2" height="3" fill="#7a8aa0"/><rect x="31.6" y="12.6" width="2" height="3" fill="#b89a3a"/><rect x="35.2" y="12.6" width="2" height="3" fill="#3a8ab8"/><rect x="38.8" y="12.6" width="2" height="3" fill="#3a8ac8"/><rect x="24.4" y="24.6" width="7" height=".9" fill="#5a6478"/><rect x="34" y="24.6" width="7" height=".9" fill="#5a6478"/><rect x="24" y="33.4" width="2" height="2" fill="#8a94a4"/><rect x="0" y="38.2" width="70" height="1.6" fill="#10141c"/><rect x="1.5" y="1.5" width="1.4" height="1.8" fill="#cdd"/><rect x="6" y="1.5" width="1.4" height="1.8" fill="#9ab"/><rect x="10.6" y="1.5" width="1.4" height="1.8" fill="#3c9"/></g></g></svg>
<svg style="left:640.1px;top:291.8px" width="70" height="39.8" viewBox="0 0 70 39.8" preserveAspectRatio="none"><defs><clipPath id="cpd"><rect width="70" height="39.8"/></clipPath></defs><g clip-path="url(#cpd)"><g style="filter:blur(.35px)"><defs><radialGradient id="dbgd" cx=".55" cy=".55" r=".75"><stop offset="0" stop-color="#07183c"/><stop offset="1" stop-color="#020814"/></radialGradient><linearGradient id="dptd" x1="0" y1="0" x2="1" y2="0"><stop offset="0" stop-color="#07247c"/><stop offset=".55" stop-color="#0a3cb4"/><stop offset="1" stop-color="#0b57e2"/></linearGradient></defs><rect width="70" height="40" fill="url(#dbgd)"/><g transform="translate(0 0) scale(1)"><path d="M3 38 Q5 28 13 24 Q21 20 26 12 Q31 5 37 4 Q43 3 46 8 Q50 12 52 17 Q62 21 69 33 L69 38 Z" fill="url(#dptd)"/><path d="M12 38 Q13 27 26 16 Q21 28 24 38 Z" fill="#051c62"/><path d="M4 37 Q8 28 15 25 Q10 31 10 38 Z" fill="#0a2f96"/><path d="M31 6 Q41 12 42 38 H35 Q38 20 31 6 Z" fill="#082c92" opacity=".9"/><path d="M43 7 Q53 16 53 38 H47 Q50 20 43 7 Z" fill="#0d5cea"/><path d="M52 18 Q61 24 63 38 H57 Q58 27 52 18 Z" fill="#1266f0"/><path d="M5 36 Q10 27 19 24" fill="none" stroke="#0a34a4" stroke-width="1"/></g><rect x="17" y="7.6" width="34" height="23.3" fill="#2b2d31"/><rect x="17" y="7.6" width="34" height="1.8" fill="#3a3c41"/><rect x="24" y="17.8" width="21" height="10.4" fill="#f6f6f6"/><rect x="26.6" y="21.4" width="4.6" height="2.8" fill="#e8404a"/><rect x="33" y="22.2" width="7" height=".8" fill="#c9c9c9"/><rect x="41.6" y="28.6" width="4" height="1.4" fill="#6fbf3a"/><rect x="0" y="38.2" width="70" height="1.6" fill="#10141c"/><rect x="1.5" y="1.5" width="1.4" height="1.8" fill="#cdd"/><rect x="6" y="1.5" width="1.4" height="1.8" fill="#9ab"/><rect x="10.6" y="1.5" width="1.4" height="1.8" fill="#3c9"/></g></g></svg>
<svg style="left:725.2px;top:292.8px" width="70" height="38.8" viewBox="0 0 70 39.8" preserveAspectRatio="none"><defs><clipPath id="cpe"><rect width="70" height="39.8"/></clipPath></defs><g clip-path="url(#cpe)"><g style="filter:blur(.35px)"><defs><linearGradient id="pe" x1="0" y1="0" x2="0" y2="1"><stop offset="0" stop-color="#174668"/><stop offset=".35" stop-color="#3d6482"/><stop offset=".62" stop-color="#8d8f92"/><stop offset=".84" stop-color="#e2a67a"/><stop offset="1" stop-color="#f1b586"/></linearGradient></defs><rect width="70" height="39.8" fill="url(#pe)"/><rect x=".8" y=".8" width="33.4" height="34.2" fill="#161b34" stroke="#2c4a78" stroke-width=".4"/><rect x="3" y="14.4" width="13" height=".9" fill="#c9cede"/><rect x="3" y="19" width="22" height=".6" fill="#56607a"/><rect x="3" y="24" width="24" height=".5" fill="#3a4460"/><rect x="30" y="4.4" width="33" height="24.2" fill="#1f2328"/><rect x="30" y="4.4" width="9" height="24.2" fill="#2b2f36"/><rect x="41" y="8.4" width="1.8" height="1.8" fill="#4aa8e8"/><rect x="45.5" y="8.4" width="1.8" height="1.8" fill="#b070e0"/><rect x="50" y="8.4" width="1.8" height="1.8" fill="#6a9ae8"/><rect x="54.5" y="8.4" width="1.8" height="1.8" fill="#e8c04a"/><rect x="59" y="8.4" width="1.8" height="1.8" fill="#4aa8e8"/><rect x="41.4" y="11.8" width="1.8" height="1.6" fill="#e88a6a"/><rect x="45.8" y="11.8" width="1.8" height="1.6" fill="#3ac8a0"/><rect x="50.2" y="11.8" width="1.8" height="1.6" fill="#c8c8d0"/><rect x="0" y="38.2" width="70" height="1.6" fill="#1c1a20"/></g></g></svg>
<svg style="left:810.3px;top:292.8px" width="70" height="38.8" viewBox="0 0 70 39.8" preserveAspectRatio="none"><defs><clipPath id="cpf"><rect width="70" height="39.8"/></clipPath></defs><g clip-path="url(#cpf)"><g style="filter:blur(.35px)"><defs><linearGradient id="pf" x1="0" y1="0" x2="0" y2="1"><stop offset="0" stop-color="#174668"/><stop offset=".5" stop-color="#7d878f"/><stop offset=".74" stop-color="#d79f78"/><stop offset=".9" stop-color="#f0b283"/><stop offset="1" stop-color="#f3b98c"/></linearGradient></defs><rect width="70" height="39.8" fill="url(#pf)"/><rect x="9.6" y="4" width="33" height="25.8" fill="#262b2f"/><rect x="45" y="8" width="20.6" height="23" fill="#2a2d33"/><rect x="0" y="38.2" width="70" height="1.6" fill="#1c1a20"/></g></g></svg>
<svg style="left:895.4px;top:292.3px" width="70" height="39.3" viewBox="0 0 70 39.8" preserveAspectRatio="none"><defs><clipPath id="cpg"><rect width="70" height="39.8"/></clipPath></defs><g clip-path="url(#cpg)"><g style="filter:blur(.35px)"><rect width="70" height="39.8" fill="#000"/><path d="M31.6 17 h2.9 v2.9 h-2.9 z M34.9 17 h2.9 v2.9 h-2.9 z M31.6 20.3 h2.9 v2.9 h-2.9 z M34.9 20.3 h2.9 v2.9 h-2.9 z" fill="#1f86ea"/><rect x="34.6" y="1" width="9.4" height=".8" fill="#d8d8d8"/><rect x="66.6" y="37.2" width="1.6" height="1.2" fill="#c44"/><rect x="60" y="37.6" width="5" height=".5" fill="#666"/></g></g></svg>
<svg style="left:980.5px;top:291.8px" width="70" height="39.8" viewBox="0 0 70 39.8" preserveAspectRatio="none"><defs><clipPath id="cph"><rect width="70" height="39.8"/></clipPath></defs><g clip-path="url(#cph)"><g style="filter:blur(.35px)"><defs><linearGradient id="lbgh" x1="0" y1="0" x2=".3" y2="1"><stop offset="0" stop-color="#a9ccfa"/><stop offset="1" stop-color="#c3dbfb"/></linearGradient><linearGradient id="lpth" x1="0" y1="1" x2="1" y2="0"><stop offset="0" stop-color="#4a98f6"/><stop offset="1" stop-color="#2078f0"/></linearGradient></defs><rect width="70" height="40" fill="url(#lbgh)"/><g transform="translate(0 0) scale(1)"><path d="M3 38 Q6 30 14 27 L46 18 Q54 22 52 38 Z" fill="#3488f3"/><ellipse cx="27" cy="19.5" rx="24.5" ry="9" transform="rotate(-36 27 19.5)" fill="url(#lpth)"/><path d="M9 33 Q26 31 45 7" fill="none" stroke="#8cbcfa" stroke-width="1"/><path d="M13 36 Q32 33 47 13" fill="none" stroke="#6aa6f8" stroke-width=".9"/><path d="M42 6 Q49 3 52 9 Q53 15 49 22 Q47 30 48 38 L41 38 Q45 24 47 14 Q47 8 42 6 Z" fill="#e4effd"/><path d="M40 6.5 Q46 6 47 12 L44 19 Q45 10 40 6.5 Z" fill="#1468ea"/><path d="M30 38 Q36 28 45 25 L43 38 Z" fill="#1a6cea"/><path d="M22 38 Q30 31 40 29" fill="none" stroke="#7ab2fa" stroke-width=".8"/></g><rect x="43.4" y="13.4" width="26" height="24.2" fill="#e3eefb" opacity=".95"/><rect x="46.4" y="16.8" width="1.8" height="1.6" fill="#b7c7da"/><rect x="46.4" y="22.8" width="1.8" height="1.6" fill="#b7c7da"/><rect x="52.4" y="16.8" width="1.8" height="1.6" fill="#b7c7da"/><rect x="52.4" y="22.8" width="1.8" height="1.6" fill="#b7c7da"/><rect x="58.4" y="16.8" width="1.8" height="1.6" fill="#b7c7da"/><rect x="58.4" y="22.8" width="1.8" height="1.6" fill="#b7c7da"/><rect x="0" y="38" width="70" height="1.8" fill="#e6f0fb"/><rect x="2.4" y="1.6" width="1.8" height="2.4" fill="#d8e6f8"/><rect x="7.4" y="1.4" width="3" height="2.6" fill="#2f5a46"/><rect x="13" y="1.4" width="2.6" height="2.6" fill="#2a8aa8"/><rect x=".25" y=".25" width="69.5" height="39.3" fill="none" stroke="#eef5fd" stroke-width=".5"/></g></g></svg>
<svg style="left:1065.6px;top:291.8px" width="70" height="39.8" viewBox="0 0 70 39.8" preserveAspectRatio="none"><defs><clipPath id="cpi"><rect width="70" height="39.8"/></clipPath></defs><g clip-path="url(#cpi)"><g style="filter:blur(.35px)"><defs><linearGradient id="lbgi" x1="0" y1="0" x2=".3" y2="1"><stop offset="0" stop-color="#a9ccfa"/><stop offset="1" stop-color="#c3dbfb"/></linearGradient><linearGradient id="lpti" x1="0" y1="1" x2="1" y2="0"><stop offset="0" stop-color="#4a98f6"/><stop offset="1" stop-color="#2078f0"/></linearGradient></defs><rect width="70" height="40" fill="url(#lbgi)"/><g transform="translate(0 0) scale(1)"><path d="M3 38 Q6 30 14 27 L46 18 Q54 22 52 38 Z" fill="#3488f3"/><ellipse cx="27" cy="19.5" rx="24.5" ry="9" transform="rotate(-36 27 19.5)" fill="url(#lpti)"/><path d="M9 33 Q26 31 45 7" fill="none" stroke="#8cbcfa" stroke-width="1"/><path d="M13 36 Q32 33 47 13" fill="none" stroke="#6aa6f8" stroke-width=".9"/><path d="M42 6 Q49 3 52 9 Q53 15 49 22 Q47 30 48 38 L41 38 Q45 24 47 14 Q47 8 42 6 Z" fill="#e4effd"/><path d="M40 6.5 Q46 6 47 12 L44 19 Q45 10 40 6.5 Z" fill="#1468ea"/><path d="M30 38 Q36 28 45 25 L43 38 Z" fill="#1a6cea"/><path d="M22 38 Q30 31 40 29" fill="none" stroke="#7ab2fa" stroke-width=".8"/></g><rect x="51.4" y="19.8" width="18" height="17.8" fill="#e3eefb" opacity=".95"/><rect x="54.4" y="23.2" width="1.8" height="1.6" fill="#b7c7da"/><rect x="54.4" y="29.2" width="1.8" height="1.6" fill="#b7c7da"/><rect x="60.4" y="23.2" width="1.8" height="1.6" fill="#b7c7da"/><rect x="60.4" y="29.2" width="1.8" height="1.6" fill="#b7c7da"/><rect x="0" y="38" width="70" height="1.8" fill="#e6f0fb"/><rect x="2.4" y="1.6" width="1.8" height="2.4" fill="#d8e6f8"/><rect x="7.4" y="1.4" width="3" height="2.6" fill="#2f5a46"/><rect x="13" y="1.4" width="2.6" height="2.6" fill="#2a8aa8"/><rect x=".25" y=".25" width="69.5" height="39.3" fill="none" stroke="#eef5fd" stroke-width=".5"/></g></g></svg>
<svg style="left:384.8px;top:406.2px" width="70" height="46.6" viewBox="0 0 70 46.6" preserveAspectRatio="none"><defs><clipPath id="cpj"><rect width="70" height="46.6"/></clipPath></defs><g clip-path="url(#cpj)"><g style="filter:blur(.35px)"><defs><linearGradient id="mhj" x1="0" x2="1"><stop offset="0" stop-color="#2a0e70"/><stop offset=".3" stop-color="#3a0c58"/><stop offset=".62" stop-color="#3c0a30"/><stop offset="1" stop-color="#4a0a12"/></linearGradient><linearGradient id="mvj" x1="0" y1="0" x2="0" y2="1"><stop offset="0" stop-color="#05030c" stop-opacity=".8"/><stop offset=".55" stop-color="#05030c" stop-opacity=".35"/><stop offset="1" stop-color="#05030c" stop-opacity="0"/></linearGradient><radialGradient id="mgj" cx=".56" cy=".78" r=".5"><stop offset="0" stop-color="#d01cb8"/><stop offset=".45" stop-color="#9812a8" stop-opacity=".8"/><stop offset="1" stop-color="#60109a" stop-opacity="0"/></radialGradient></defs><rect width="70" height="46.6" fill="url(#mhj)"/><rect width="70" height="46.6" fill="url(#mvj)"/><rect width="70" height="46.6" fill="url(#mgj)"/><ellipse cx="2" cy="46" rx="16" ry="9" fill="#6a2ad0" opacity=".75" style="filter:blur(3px)"/><ellipse cx="70" cy="26" rx="7" ry="16" fill="#8a1218" opacity=".7" style="filter:blur(3px)"/><path d="M0 41 Q30 56 56 38 Q64 32 70 22" fill="none" stroke="#ff5aa8" stroke-width="1.1"/><path d="M0 41 Q30 56 56 38 Q64 32 70 22 L70 46.6 L0 46.6 Z" fill="#7a0c30" opacity=".35"/><rect x="3" y="1" width="62" height="35" fill="#161616"/><rect x="3" y="1" width="62" height="3.4" fill="#0a0a0a"/><rect x="3" y="4.4" width="62" height="4" fill="#1f1f1f"/><rect x="6" y="5.4" width="2" height="2" fill="#888"/><rect x="9.6" y="5.4" width="2" height="2" fill="#888"/><rect x="13.2" y="5.4" width="2" height="2" fill="#888"/><rect x="16.8" y="5.4" width="2" height="2" fill="#888"/><rect x="20.4" y="5.4" width="2" height="2" fill="#888"/><rect x="24" y="5.4" width="2" height="2" fill="#888"/><rect x="27.6" y="5.4" width="2" height="2" fill="#888"/><rect x="31.2" y="5.4" width="2" height="2" fill="#888"/><rect x="34.8" y="5.4" width="2" height="2" fill="#888"/><rect x="38.4" y="5.4" width="2" height="2" fill="#888"/><rect x="42" y="5.4" width="2" height="2" fill="#888"/><rect x="45.6" y="5.4" width="2" height="2" fill="#888"/><rect x="49.2" y="5.4" width="2" height="2" fill="#888"/><rect x="52.8" y="5.4" width="2" height="2" fill="#888"/><rect x="15" y="12" width="14" height=".6" fill="#4a4a4a"/><rect x="33" y="12" width="8" height=".6" fill="#3c3c3c"/><rect x="15" y="14.2" width="14" height=".6" fill="#4a4a4a"/><rect x="33" y="14.2" width="8" height=".6" fill="#3c3c3c"/><rect x="15" y="16.4" width="14" height=".6" fill="#4a4a4a"/><rect x="33" y="16.4" width="8" height=".6" fill="#3c3c3c"/><rect x="15" y="18.6" width="14" height=".6" fill="#4a4a4a"/><rect x="33" y="18.6" width="8" height=".6" fill="#3c3c3c"/><rect x="15" y="20.8" width="14" height=".6" fill="#4a4a4a"/><rect x="33" y="20.8" width="8" height=".6" fill="#3c3c3c"/><rect x="15" y="23" width="14" height=".6" fill="#4a4a4a"/><rect x="33" y="23" width="8" height=".6" fill="#3c3c3c"/><rect x="15" y="25.2" width="14" height=".6" fill="#4a4a4a"/><rect x="33" y="25.2" width="8" height=".6" fill="#3c3c3c"/><rect x="15" y="27.4" width="14" height=".6" fill="#4a4a4a"/><rect x="33" y="27.4" width="8" height=".6" fill="#3c3c3c"/><rect x="15" y="29.6" width="14" height=".6" fill="#4a4a4a"/><rect x="33" y="29.6" width="8" height=".6" fill="#3c3c3c"/><rect x="5" y="12" width="6" height=".7" fill="#5a6a7a"/><rect x="5" y="14.6" width="6" height=".7" fill="#5a6a7a"/><rect x="5" y="17.2" width="6" height=".7" fill="#5a6a7a"/><rect x="5" y="19.8" width="6" height=".7" fill="#5a6a7a"/><rect x="5" y="22.4" width="6" height=".7" fill="#5a6a7a"/><rect x="5" y="25" width="6" height=".7" fill="#5a6a7a"/><rect x="5" y="27.6" width="6" height=".7" fill="#5a6a7a"/><rect x="5" y="30.2" width="6" height=".7" fill="#5a6a7a"/><rect x="48" y="9" width="17" height="27" fill="#1d1d1d"/><path d="M53.6 15.6 h2 l.8 .8 h3 v3.6 h-5.8 z" fill="#f6c94a"/><rect x="50" y="26" width="10" height=".7" fill="#aaa"/><rect x="51" y="29" width="12" height="3" fill="#252525"/><rect x="19.6" y="21.6" width="14.8" height="24" fill="#343434"/><rect x="21.4" y="23.4" width="8" height=".5" fill="#9a9a9a"/><rect x="21.4" y="25.3" width="8" height=".5" fill="#9a9a9a"/><rect x="21.4" y="27.2" width="8" height=".5" fill="#9a9a9a"/><rect x="21.4" y="29.1" width="8" height=".5" fill="#9a9a9a"/><rect x="21.4" y="31" width="8" height=".5" fill="#9a9a9a"/><rect x="21.4" y="32.9" width="8" height=".5" fill="#9a9a9a"/><rect x="21.4" y="34.8" width="8" height=".5" fill="#9a9a9a"/><rect x="21.4" y="36.7" width="8" height=".5" fill="#9a9a9a"/><rect x="21.4" y="38.6" width="8" height=".5" fill="#9a9a9a"/><rect x="21.4" y="40.5" width="8" height=".5" fill="#9a9a9a"/><rect x="21.4" y="42.4" width="8" height=".5" fill="#9a9a9a"/><rect x="62" y="36" width="3" height="2" fill="#ddd"/></g></g></svg>
<svg style="left:469.9px;top:413.3px" width="70" height="39.4" viewBox="0 0 70 39.4" preserveAspectRatio="none"><defs><clipPath id="cpk"><rect width="70" height="39.4"/></clipPath></defs><g clip-path="url(#cpk)"><g style="filter:blur(.35px)"><defs><linearGradient id="mhk" x1="0" x2="1"><stop offset="0" stop-color="#2a0e70"/><stop offset=".3" stop-color="#3a0c58"/><stop offset=".62" stop-color="#3c0a30"/><stop offset="1" stop-color="#4a0a12"/></linearGradient><linearGradient id="mvk" x1="0" y1="0" x2="0" y2="1"><stop offset="0" stop-color="#05030c" stop-opacity=".8"/><stop offset=".55" stop-color="#05030c" stop-opacity=".35"/><stop offset="1" stop-color="#05030c" stop-opacity="0"/></linearGradient><radialGradient id="mgk" cx=".56" cy=".78" r=".5"><stop offset="0" stop-color="#d01cb8"/><stop offset=".45" stop-color="#9812a8" stop-opacity=".8"/><stop offset="1" stop-color="#60109a" stop-opacity="0"/></radialGradient></defs><rect width="70" height="39.4" fill="url(#mhk)"/><rect width="70" height="39.4" fill="url(#mvk)"/><rect width="70" height="39.4" fill="url(#mgk)"/><path d="M21.6 32 Q30 38.6 39 37.8 Q52 36 56.4 21 Q52 30 40 33 Q30 35 21.6 32 Z" fill="#ffc0ea" opacity=".28"/><path d="M21.6 32.2 Q30 38.5 39 37.8 Q52 36 56.2 21.3" fill="none" stroke="#ff8ad8" stroke-width=".9"/><ellipse cx="2" cy="39" rx="13" ry="8" fill="#4a1cb0" opacity=".6" style="filter:blur(3px)"/><ellipse cx="70" cy="22" rx="12" ry="18" fill="#6a0c14" opacity=".55" style="filter:blur(3px)"/><rect x="28" y="9.4" width="16" height="14.4" fill="#f4f4f6"/><rect x="30" y="11" width="11" height="2.2" fill="#1e78d8"/><rect x="30" y="15" width="9" height=".6" fill="#aaa"/><rect x="30" y="17" width="10" height=".6" fill="#bbb"/><rect x=".8" y="16.6" width="20.6" height="21.4" fill="#2a2838"/><rect x="10.6" y="19" width="4.4" height="4.4" fill="#5a6ad8"/><rect x="2.6" y="19" width="1.6" height="1.6" fill="#e55"/><rect x="2.6" y="23" width="1.6" height="1.6" fill="#5ae"/><rect x="2.6" y="27" width="1.6" height="1.6" fill="#ea5"/><rect x="1" y="1.5" width="1.4" height="1.6" fill="#ccd"/><rect x="1" y="5.5" width="1.4" height="1.6" fill="#e84"/><rect x="1" y="9.5" width="1.4" height="1.6" fill="#d44"/><rect x="0" y="37.8" width="70" height="1.6" fill="#1a1426"/></g></g></svg>
<svg style="left:555px;top:413.3px" width="70" height="39.4" viewBox="0 0 70 39.4" preserveAspectRatio="none"><defs><clipPath id="cpl"><rect width="70" height="39.4"/></clipPath></defs><g clip-path="url(#cpl)"><g style="filter:blur(.35px)"><defs><linearGradient id="gbl" x1="0" y1="0" x2="1" y2="1"><stop offset="0" stop-color="#b4c8de"/><stop offset="1" stop-color="#d3e0ee"/></linearGradient></defs><rect width="70" height="40" fill="url(#gbl)"/><g transform="translate(33 28) scale(0.95)"><path d="M-25 18 Q-29 3 -17 -5 Q-14 -17 0 -17 Q13 -20 18 -9 Q29 -3 25 18 Z" fill="#083fc4"/><ellipse cx="-13" cy="5" rx="9.5" ry="14" transform="rotate(-32 -13 5)" fill="#0b52e6"/><ellipse cx="12" cy="3" rx="9" ry="15" transform="rotate(26 12 3)" fill="#0b52e6"/><ellipse cx="-1" cy="-2" rx="8.5" ry="15" transform="rotate(-6 -1 -2)" fill="#2a6cf2"/><path d="M-8 18 Q-9 2 2 -13 Q-1 4 4 18 Z" fill="#083fc4"/><path d="M6 18 Q6 0 15 -9 Q12 6 17 18 Z" fill="#083fc4" opacity=".8"/><ellipse cx="-18" cy="13" rx="9" ry="6" transform="rotate(-20 -18 13)" fill="#2a6cf2"/></g><rect x="20" y="9.4" width="27.6" height="18.6" fill="#23262b"/><rect x="20" y="9.4" width="27.6" height="1.6" fill="#33373d"/><rect x="27" y="12.4" width="13" height=".5" fill="#8a9098"/><rect x="27" y="14.2" width="13" height=".5" fill="#8a9098"/><rect x="27" y="16" width="13" height=".5" fill="#8a9098"/><rect x="27" y="17.8" width="13" height=".5" fill="#8a9098"/><rect x="27" y="19.6" width="13" height=".5" fill="#8a9098"/><rect x="27" y="21.4" width="13" height=".5" fill="#8a9098"/><rect x="27" y="23.2" width="13" height=".5" fill="#8a9098"/><rect x="27" y="25" width="13" height=".5" fill="#8a9098"/><rect x="55.6" y="16.6" width="13.4" height="21.4" fill="#2b3845"/><rect x="57" y="19" width="6" height=".5" fill="#7f8fa0"/><rect x="57" y="21.4" width="6" height=".5" fill="#7f8fa0"/><rect x="57" y="23.8" width="6" height=".5" fill="#7f8fa0"/><rect x="57" y="26.2" width="6" height=".5" fill="#7f8fa0"/><rect x="57" y="28.6" width="6" height=".5" fill="#7f8fa0"/><rect x="57" y="31" width="6" height=".5" fill="#7f8fa0"/><rect x="57.4" y="34.6" width="3.6" height="1.8" fill="#3aa8e8"/><rect x="0" y="37.8" width="70" height="1.6" fill="#d9e3ee"/></g></g></svg>
<svg style="left:640.1px;top:413.3px" width="70" height="39.4" viewBox="0 0 70 39.4" preserveAspectRatio="none"><defs><clipPath id="cpm"><rect width="70" height="39.4"/></clipPath></defs><g clip-path="url(#cpm)"><g style="filter:blur(.35px)"><defs><radialGradient id="dbgm" cx=".55" cy=".55" r=".75"><stop offset="0" stop-color="#07183c"/><stop offset="1" stop-color="#020814"/></radialGradient><linearGradient id="dptm" x1="0" y1="0" x2="1" y2="0"><stop offset="0" stop-color="#07247c"/><stop offset=".55" stop-color="#0a3cb4"/><stop offset="1" stop-color="#0b57e2"/></linearGradient></defs><rect width="70" height="40" fill="url(#dbgm)"/><g transform="translate(14 -1) scale(0.92)"><path d="M3 38 Q5 28 13 24 Q21 20 26 12 Q31 5 37 4 Q43 3 46 8 Q50 12 52 17 Q62 21 69 33 L69 38 Z" fill="url(#dptm)"/><path d="M12 38 Q13 27 26 16 Q21 28 24 38 Z" fill="#051c62"/><path d="M4 37 Q8 28 15 25 Q10 31 10 38 Z" fill="#0a2f96"/><path d="M31 6 Q41 12 42 38 H35 Q38 20 31 6 Z" fill="#082c92" opacity=".9"/><path d="M43 7 Q53 16 53 38 H47 Q50 20 43 7 Z" fill="#0d5cea"/><path d="M52 18 Q61 24 63 38 H57 Q58 27 52 18 Z" fill="#1266f0"/><path d="M5 36 Q10 27 19 24" fill="none" stroke="#0a34a4" stroke-width="1"/></g><rect x="1" y="13" width="25.4" height="25" fill="#283240"/><rect x="1" y="13" width="25.4" height="2.2" fill="#36404e"/><rect x="3" y="17.4" width="7" height=".5" fill="#8a98aa"/><rect x="3" y="19.3" width="7" height=".5" fill="#8a98aa"/><rect x="3" y="21.2" width="7" height=".5" fill="#8a98aa"/><rect x="3" y="23.1" width="7" height=".5" fill="#8a98aa"/><rect x="3" y="25" width="7" height=".5" fill="#8a98aa"/><rect x="3" y="26.9" width="7" height=".5" fill="#8a98aa"/><rect x="3" y="28.8" width="7" height=".5" fill="#8a98aa"/><rect x="3" y="30.7" width="7" height=".5" fill="#8a98aa"/><rect x="3" y="32.6" width="7" height=".5" fill="#8a98aa"/><rect x="14" y="21" width="8" height=".5" fill="#70809a"/><rect x="14" y="22.9" width="8" height=".5" fill="#70809a"/><rect x="14" y="24.8" width="8" height=".5" fill="#70809a"/><rect x="14" y="26.7" width="8" height=".5" fill="#70809a"/><rect x="14" y="28.6" width="8" height=".5" fill="#70809a"/><rect x="14" y="30.5" width="8" height=".5" fill="#70809a"/><rect x="14" y="32.4" width="8" height=".5" fill="#70809a"/><circle cx="18.6" cy="18.2" r="1.2" fill="#b8b0f0"/><rect x="0" y="37.8" width="70" height="1.6" fill="#10141c"/><rect x="1" y="1.4" width="1.2" height="1.6" fill="#ccd"/></g></g></svg>
<svg style="left:725.2px;top:413.3px" width="70" height="39.4" viewBox="0 0 70 39.4" preserveAspectRatio="none"><defs><clipPath id="cpn"><rect width="70" height="39.4"/></clipPath></defs><g clip-path="url(#cpn)"><g style="filter:blur(.35px)"><defs><linearGradient id="gbn" x1="0" y1="0" x2="1" y2="1"><stop offset="0" stop-color="#b4c8de"/><stop offset="1" stop-color="#d3e0ee"/></linearGradient></defs><rect width="70" height="40" fill="url(#gbn)"/><g transform="translate(36 24) scale(1)"><path d="M-25 18 Q-29 3 -17 -5 Q-14 -17 0 -17 Q13 -20 18 -9 Q29 -3 25 18 Z" fill="#083fc4"/><ellipse cx="-13" cy="5" rx="9.5" ry="14" transform="rotate(-32 -13 5)" fill="#0b52e6"/><ellipse cx="12" cy="3" rx="9" ry="15" transform="rotate(26 12 3)" fill="#0b52e6"/><ellipse cx="-1" cy="-2" rx="8.5" ry="15" transform="rotate(-6 -1 -2)" fill="#2a6cf2"/><path d="M-8 18 Q-9 2 2 -13 Q-1 4 4 18 Z" fill="#083fc4"/><path d="M6 18 Q6 0 15 -9 Q12 6 17 18 Z" fill="#083fc4" opacity=".8"/><ellipse cx="-18" cy="13" rx="9" ry="6" transform="rotate(-20 -18 13)" fill="#2a6cf2"/></g><rect x=".6" y=".6" width="23" height="21" fill="#2c3844"/><rect x="14.6" y="2" width="2" height="2" fill="#e84a8a"/><rect x="18.6" y="2" width="2" height="2" fill="#4a8ae8"/><rect x="14.6" y="6" width="2" height="2" fill="#e8b84a"/><rect x="18.6" y="6" width="2" height="2" fill="#4ae8a8"/><rect x="2" y="2.4" width="1.4" height="1.4" fill="#9ab"/><rect x="2" y="5.4" width="1.4" height="1.4" fill="#9ab"/><rect x="2" y="8.4" width="1.4" height="1.4" fill="#9ab"/><rect x="2" y="11.4" width="1.4" height="1.4" fill="#9ab"/><rect x="2" y="14.4" width="1.4" height="1.4" fill="#9ab"/><rect x="2" y="17.4" width="1.4" height="1.4" fill="#9ab"/><rect x="22.8" y="10.4" width="26.8" height="18.6" fill="#222428"/><rect x="22.8" y="10.4" width="26.8" height="1.6" fill="#2f3237"/><rect x="29" y="13.4" width="14" height=".5" fill="#8a9098"/><rect x="29" y="15.2" width="14" height=".5" fill="#8a9098"/><rect x="29" y="17" width="14" height=".5" fill="#8a9098"/><rect x="29" y="18.8" width="14" height=".5" fill="#8a9098"/><rect x="29" y="20.6" width="14" height=".5" fill="#8a9098"/><rect x="29" y="22.4" width="14" height=".5" fill="#8a9098"/><rect x="29" y="24.2" width="14" height=".5" fill="#8a9098"/><rect x="0" y="37.8" width="70" height="1.6" fill="#d9e3ee"/></g></g></svg>
<svg style="left:810.3px;top:414.4px" width="70" height="38.3" viewBox="0 0 70 38.3" preserveAspectRatio="none"><defs><clipPath id="cpo"><rect width="70" height="38.3"/></clipPath></defs><g clip-path="url(#cpo)"><g style="filter:blur(.35px)"><defs><linearGradient id="go" x1="0" y1="0" x2="1" y2="1"><stop offset="0" stop-color="#b9d2ee"/><stop offset="1" stop-color="#cfe0f2"/></linearGradient></defs><rect width="70" height="38.3" fill="url(#go)"/><g transform="translate(36 21) scale(1.1)"><path d="M-25 18 Q-29 3 -17 -5 Q-14 -17 0 -17 Q13 -20 18 -9 Q29 -3 25 18 Z" fill="#083fc4"/><ellipse cx="-13" cy="5" rx="9.5" ry="14" transform="rotate(-32 -13 5)" fill="#0b52e6"/><ellipse cx="12" cy="3" rx="9" ry="15" transform="rotate(26 12 3)" fill="#0b52e6"/><ellipse cx="-1" cy="-2" rx="8.5" ry="15" transform="rotate(-6 -1 -2)" fill="#2a6cf2"/><path d="M-8 18 Q-9 2 2 -13 Q-1 4 4 18 Z" fill="#083fc4"/><path d="M6 18 Q6 0 15 -9 Q12 6 17 18 Z" fill="#083fc4" opacity=".8"/><ellipse cx="-18" cy="13" rx="9" ry="6" transform="rotate(-20 -18 13)" fill="#2a6cf2"/></g><rect x="9.4" y="5" width="48.6" height="26.2" fill="#191919"/><rect x="9.4" y="5" width="48.6" height="2.4" fill="#0c0c0c"/><rect x="9.4" y="7.4" width="48.6" height="3" fill="#242424"/><rect x="12" y="8" width="1.8" height="1.6" fill="#c8a"/><rect x="15.4" y="8" width="1.8" height="1.6" fill="#999"/><rect x="18.8" y="8" width="1.8" height="1.6" fill="#999"/><rect x="22.2" y="8" width="1.8" height="1.6" fill="#999"/><rect x="25.6" y="8" width="1.8" height="1.6" fill="#fc5"/><rect x="29" y="8" width="1.8" height="1.6" fill="#999"/><rect x="32.4" y="8" width="1.8" height="1.6" fill="#fc5"/><rect x="35.8" y="8" width="1.8" height="1.6" fill="#999"/><rect x="39.2" y="8" width="1.8" height="1.6" fill="#999"/><rect x="42.6" y="8" width="1.8" height="1.6" fill="#bbb"/><rect x="46" y="8" width="1.8" height="1.6" fill="#999"/><rect x="49.4" y="8" width="1.8" height="1.6" fill="#fc5"/><rect x="52.8" y="8" width="1.8" height="1.6" fill="#999"/><rect x="18" y="13" width="5" height=".6" fill="#d8b04a"/><rect x="28" y="13" width="9" height=".5" fill="#555"/><rect x="18" y="15" width="5" height=".6" fill="#d8b04a"/><rect x="28" y="15" width="9" height=".5" fill="#555"/><rect x="18" y="17" width="5" height=".6" fill="#d8b04a"/><rect x="28" y="17" width="9" height=".5" fill="#555"/><rect x="46" y="10.4" width="12" height="20.8" fill="#1f1f1f"/><path d="M49.6 16.6 h5 v3.6 h-5 z" fill="#2a8ae8"/><path d="M50.6 17.4 l1.6 1.6 1.6-1.6z" fill="#bfe0ff"/><rect x="48" y="24" width="8" height=".5" fill="#999"/><rect x="47.6" y="26.4" width="9" height="3" fill="#2a2a2a"/><rect x="0" y="36.7" width="70" height="1.6" fill="#d5e2f0"/><rect x=".25" y=".25" width="69.5" height="37.8" fill="none" stroke="#e6eef8" stroke-width=".5"/></g></g></svg>
<svg style="left:895.4px;top:413.3px" width="70" height="39.4" viewBox="0 0 70 39.4" preserveAspectRatio="none"><defs><clipPath id="cpp"><rect width="70" height="39.4"/></clipPath></defs><g clip-path="url(#cpp)"><g style="filter:blur(.35px)"><defs><linearGradient id="sk" x1="0" y1="0" x2="0" y2="1"><stop offset="0" stop-color="#86a6d6"/><stop offset=".4" stop-color="#a2a8d4"/><stop offset=".75" stop-color="#cfa8c8"/><stop offset="1" stop-color="#eaa4b8"/></linearGradient><linearGradient id="sl" x1="0" x2="1"><stop offset="0" stop-color="#2a7ab8" stop-opacity=".9"/><stop offset=".5" stop-color="#4a88c0" stop-opacity="0"/></linearGradient></defs><rect width="70" height="39.4" fill="url(#sk)"/><rect width="70" height="24" fill="url(#sl)"/><rect x="4.6" y="3.6" width="38.2" height="22.4" fill="#1c1c1e"/><rect x="4.6" y="3.6" width="38.2" height="2" fill="#0e0e0e"/><rect x="7" y="6.4" width="1.6" height="1.4" fill="#a6c"/><rect x="10" y="6.4" width="1.6" height="1.4" fill="#999"/><rect x="13" y="6.4" width="1.6" height="1.4" fill="#999"/><rect x="16" y="6.4" width="1.6" height="1.4" fill="#fc5"/><rect x="19" y="6.4" width="1.6" height="1.4" fill="#999"/><rect x="22" y="6.4" width="1.6" height="1.4" fill="#fc5"/><rect x="25" y="6.4" width="1.6" height="1.4" fill="#999"/><rect x="28" y="6.4" width="1.6" height="1.4" fill="#999"/><rect x="31" y="6.4" width="1.6" height="1.4" fill="#999"/><rect x="34" y="6.4" width="1.6" height="1.4" fill="#999"/><rect x="6" y="10" width="3" height=".5" fill="#7a8a9a"/><rect x="6" y="11.8" width="3" height=".5" fill="#7a8a9a"/><rect x="6" y="13.6" width="3" height=".5" fill="#7a8a9a"/><rect x="6" y="15.4" width="3" height=".5" fill="#7a8a9a"/><rect x="6" y="17.2" width="3" height=".5" fill="#7a8a9a"/><rect x="6" y="19" width="3" height=".5" fill="#7a8a9a"/><rect x="6" y="20.8" width="3" height=".5" fill="#7a8a9a"/><rect x="20" y="11" width="4" height=".5" fill="#888"/><rect x="28.4" y="13.6" width="27.6" height="19" fill="#26262c"/><rect x="28.4" y="13.6" width="27.6" height="1.6" fill="#33333a"/><rect x="36" y="12.8" width="3" height="1.4" fill="#f0c040"/><rect x="34" y="16.6" width="10" height=".5" fill="#8a8a96"/><rect x="34" y="18.3" width="13" height=".5" fill="#8a8a96"/><rect x="34" y="20" width="16" height=".5" fill="#8a8a96"/><rect x="34" y="21.7" width="12" height=".5" fill="#8a8a96"/><rect x="34" y="23.4" width="15" height=".5" fill="#8a8a96"/><rect x="34" y="25.1" width="11" height=".5" fill="#8a8a96"/><rect x="34" y="26.8" width="14" height=".5" fill="#8a8a96"/><rect x="34" y="28.5" width="10" height=".5" fill="#8a8a96"/><rect x="34" y="30.2" width="13" height=".5" fill="#8a8a96"/><rect x="12" y="2" width="3" height="1.6" fill="#e8e8f0"/><rect x="0" y="37.8" width="70" height="1.6" fill="#d8a0b4"/></g></g></svg>
<svg style="left:389.1px;top:338.8px" width="9.2" height="9.2" viewBox="0 0 9.2 9.2"><circle cx="4.6" cy="4.6" r="4.1" fill="#e3ece5" stroke="#1e8f44" stroke-width="1.2"/><path d="M2.7 4.8 L4.1 6.1 L6.6 3.3" fill="none" stroke="#2a9a4a" stroke-width="1.1"/></svg>
<div class="t cap" style="left:400.5px;top:343.4px;">Screenshot</div>
<div class="t cap" style="left:400.5px;top:356.4px;">2025-09-23</div>
<div class="t cap" style="left:400.5px;top:369.3px;">232204</div>
<svg style="left:474.2px;top:338.8px" width="9.2" height="9.2" viewBox="0 0 9.2 9.2"><circle cx="4.6" cy="4.6" r="4.1" fill="#e3ece5" stroke="#1e8f44" stroke-width="1.2"/><path d="M2.7 4.8 L4.1 6.1 L6.6 3.3" fill="none" stroke="#2a9a4a" stroke-width="1.1"/></svg>
<div class="t cap" style="left:485.6px;top:343.4px;">Screenshot</div>
<div class="t cap" style="left:485.6px;top:356.4px;">2025-09-23</div>
<div class="t cap" style="left:485.6px;top:369.3px;">233036</div>
<svg style="left:559.3px;top:338.8px" width="9.2" height="9.2" viewBox="0 0 9.2 9.2"><circle cx="4.6" cy="4.6" r="4.1" fill="#e3ece5" stroke="#1e8f44" stroke-width="1.2"/><path d="M2.7 4.8 L4.1 6.1 L6.6 3.3" fill="none" stroke="#2a9a4a" stroke-width="1.1"/></svg>
<div class="t cap" style="left:570.7px;top:343.4px;">Screenshot</div>
<div class="t cap" style="left:570.7px;top:356.4px;">2025-09-23</div>
<div class="t cap" style="left:570.7px;top:369.3px;">233249</div>
<svg style="left:644.4px;top:338.8px" width="9.2" height="9.2" viewBox="0 0 9.2 9.2"><circle cx="4.6" cy="4.6" r="4.1" fill="#e3ece5" stroke="#1e8f44" stroke-width="1.2"/><path d="M2.7 4.8 L4.1 6.1 L6.6 3.3" fill="none" stroke="#2a9a4a" stroke-width="1.1"/></svg>
<div class="t cap" style="left:655.8px;top:343.4px;">Screenshot</div>
<div class="t cap" style="left:655.8px;top:356.4px;">2025-09-23</div>
<div class="t cap" style="left:655.8px;top:369.3px;">233407</div>
<svg style="left:729.5px;top:338.8px" width="9.2" height="9.2" viewBox="0 0 9.2 9.2"><circle cx="4.6" cy="4.6" r="4.1" fill="#e3ece5" stroke="#1e8f44" stroke-width="1.2"/><path d="M2.7 4.8 L4.1 6.1 L6.6 3.3" fill="none" stroke="#2a9a4a" stroke-width="1.1"/></svg>
<div class="t cap" style="left:740.9px;top:343.4px;">Screenshot</div>
<div class="t cap" style="left:740.9px;top:356.4px;">2025-09-23</div>
<div class="t cap" style="left:740.9px;top:369.3px;">233604</div>
<svg style="left:814.6px;top:338.8px" width="9.2" height="9.2" viewBox="0 0 9.2 9.2"><circle cx="4.6" cy="4.6" r="4.1" fill="#e3ece5" stroke="#1e8f44" stroke-width="1.2"/><path d="M2.7 4.8 L4.1 6.1 L6.6 3.3" fill="none" stroke="#2a9a4a" stroke-width="1.1"/></svg>
<div class="t cap" style="left:826px;top:343.4px;">Screenshot</div>
<div class="t cap" style="left:826px;top:356.4px;">2025-09-23</div>
<div class="t cap" style="left:826px;top:369.3px;">233723</div>
<svg style="left:899.7px;top:338.8px" width="9.2" height="9.2" viewBox="0 0 9.2 9.2"><circle cx="4.6" cy="4.6" r="4.1" fill="#e3ece5" stroke="#1e8f44" stroke-width="1.2"/><path d="M2.7 4.8 L4.1 6.1 L6.6 3.3" fill="none" stroke="#2a9a4a" stroke-width="1.1"/></svg>
<div class="t cap" style="left:911.1px;top:343.4px;">Screenshot</div>
<div class="t cap" style="left:911.1px;top:356.4px;">2025-09-23</div>
<div class="t cap" style="left:911.1px;top:369.3px;">234245</div>
<svg style="left:984.8px;top:338.8px" width="9.2" height="9.2" viewBox="0 0 9.2 9.2"><circle cx="4.6" cy="4.6" r="4.1" fill="#e3ece5" stroke="#1e8f44" stroke-width="1.2"/><path d="M2.7 4.8 L4.1 6.1 L6.6 3.3" fill="none" stroke="#2a9a4a" stroke-width="1.1"/></svg>
<div class="t cap" style="left:996.2px;top:343.4px;">Screenshot</div>
<div class="t cap" style="left:996.2px;top:356.4px;">2025-09-23</div>
<div class="t cap" style="left:996.2px;top:369.3px;">235202</div>
<svg style="left:1069.9px;top:338.8px" width="9.2" height="9.2" viewBox="0 0 9.2 9.2"><circle cx="4.6" cy="4.6" r="4.1" fill="#e3ece5" stroke="#1e8f44" stroke-width="1.2"/><path d="M2.7 4.8 L4.1 6.1 L6.6 3.3" fill="none" stroke="#2a9a4a" stroke-width="1.1"/></svg>
<div class="t cap" style="left:1081.3px;top:343.4px;">Screenshot</div>
<div class="t cap" style="left:1081.3px;top:356.4px;">2025-09-23</div>
<div class="t cap" style="left:1081.3px;top:369.3px;">235313</div>
<svg style="left:389.1px;top:460.2px" width="9.2" height="9.2" viewBox="0 0 9.2 9.2"><circle cx="4.6" cy="4.6" r="4.1" fill="#e3ece5" stroke="#1e8f44" stroke-width="1.2"/><path d="M2.7 4.8 L4.1 6.1 L6.6 3.3" fill="none" stroke="#2a9a4a" stroke-width="1.1"/></svg>
<div class="t cap" style="left:400.5px;top:464.8px;">Screenshot</div>
<div class="t cap" style="left:400.5px;top:477.6px;">2025-09-24</div>
<div class="t cap" style="left:400.5px;top:490.4px;">230148</div>
<svg style="left:474.2px;top:460.2px" width="9.2" height="9.2" viewBox="0 0 9.2 9.2"><circle cx="4.6" cy="4.6" r="4.1" fill="#e3ece5" stroke="#1e8f44" stroke-width="1.2"/><path d="M2.7 4.8 L4.1 6.1 L6.6 3.3" fill="none" stroke="#2a9a4a" stroke-width="1.1"/></svg>
<div class="t cap" style="left:485.6px;top:464.8px;">Screenshot</div>
<div class="t cap" style="left:485.6px;top:477.6px;">2025-09-24</div>
<div class="t cap" style="left:485.6px;top:490.4px;">230532</div>
<svg style="left:559.3px;top:460.2px" width="9.2" height="9.2" viewBox="0 0 9.2 9.2"><circle cx="4.6" cy="4.6" r="4.1" fill="#e3ece5" stroke="#1e8f44" stroke-width="1.2"/><path d="M2.7 4.8 L4.1 6.1 L6.6 3.3" fill="none" stroke="#2a9a4a" stroke-width="1.1"/></svg>
<div class="t cap" style="left:570.7px;top:464.8px;">Screenshot</div>
<div class="t cap" style="left:570.7px;top:477.6px;">2025-09-24</div>
<div class="t cap" style="left:570.7px;top:490.4px;">230805</div>
<svg style="left:644.4px;top:460.2px" width="9.2" height="9.2" viewBox="0 0 9.2 9.2"><circle cx="4.6" cy="4.6" r="4.1" fill="#e3ece5" stroke="#1e8f44" stroke-width="1.2"/><path d="M2.7 4.8 L4.1 6.1 L6.6 3.3" fill="none" stroke="#2a9a4a" stroke-width="1.1"/></svg>
<div class="t cap" style="left:655.8px;top:464.8px;">Screenshot</div>
<div class="t cap" style="left:655.8px;top:477.6px;">2025-09-24</div>
<div class="t cap" style="left:655.8px;top:490.4px;">231102</div>
<svg style="left:729.5px;top:460.2px" width="9.2" height="9.2" viewBox="0 0 9.2 9.2"><circle cx="4.6" cy="4.6" r="4.1" fill="#e3ece5" stroke="#1e8f44" stroke-width="1.2"/><path d="M2.7 4.8 L4.1 6.1 L6.6 3.3" fill="none" stroke="#2a9a4a" stroke-width="1.1"/></svg>
<div class="t cap" style="left:740.9px;top:464.8px;">Screenshot</div>
<div class="t cap" style="left:740.9px;top:477.6px;">2025-09-24</div>
<div class="t cap" style="left:740.9px;top:490.4px;">231326</div>
<svg style="left:814.6px;top:460.2px" width="9.2" height="9.2" viewBox="0 0 9.2 9.2"><circle cx="4.6" cy="4.6" r="4.1" fill="#e3ece5" stroke="#1e8f44" stroke-width="1.2"/><path d="M2.7 4.8 L4.1 6.1 L6.6 3.3" fill="none" stroke="#2a9a4a" stroke-width="1.1"/></svg>
<div class="t cap" style="left:826px;top:464.8px;">Screenshot</div>
<div class="t cap" style="left:826px;top:477.6px;">2025-09-24</div>
<div class="t cap" style="left:826px;top:490.4px;">231404</div>
<svg style="left:899.7px;top:460.2px" width="9.2" height="9.2" viewBox="0 0 9.2 9.2"><circle cx="4.6" cy="4.6" r="4.1" fill="#e3ece5" stroke="#1e8f44" stroke-width="1.2"/><path d="M2.7 4.8 L4.1 6.1 L6.6 3.3" fill="none" stroke="#2a9a4a" stroke-width="1.1"/></svg>
<div class="t cap" style="left:911.1px;top:464.8px;">Screenshot</div>
<div class="t cap" style="left:911.1px;top:477.6px;">2025-09-24</div>
<div class="t cap" style="left:911.1px;top:490.4px;">232218</div>
<div class="abs" style="left:1145px;top:252px;width:1.6px;height:520px;background:#2a2a2a;"></div>
<div class="abs" style="left:1146.6px;top:252px;width:241.4px;height:177px;background:#212121;"></div>
<div class="abs" style="left:1146.6px;top:429px;width:241.4px;height:343px;background:#1b1b1b;"></div>
<svg style="left:1233.8px;top:312.5px" width="68.2" height="53.8" viewBox="0 0 69 54.6" preserveAspectRatio="none">
<defs><linearGradient id="bf1" x1="0" y1="0" x2="0" y2="1"><stop offset="0" stop-color="#ffe9a0"/><stop offset="1" stop-color="#f9c643"/></linearGradient>
<linearGradient id="bf2" x1="0" y1="0" x2="1" y2="1"><stop offset="0" stop-color="#3a7ab8"/><stop offset=".5" stop-color="#9aa6d0"/><stop offset="1" stop-color="#e8a8b8"/></linearGradient></defs>
<path d="M0 4 Q0 0 4 0 L21 0 Q23.4 0 25 1.8 L29.4 7 L65 7 Q69 7 69 11 L69 50.6 Q69 54.6 65 54.6 L4 54.6 Q0 54.6 0 50.6 Z" fill="#f2b31c"/>
<rect x="3" y="11" width="63" height="34" rx="2" fill="url(#bf2)"/>
<rect x="3" y="14.2" width="39" height="20" fill="#1a1a1c"/><rect x="3" y="14.2" width="39" height="2.6" fill="#101012"/><rect x="10" y="14.6" width="3" height="1.6" fill="#e8c0e0"/><rect x="16" y="17.4" width="2.4" height="1.6" fill="#e8c050"/><rect x="21" y="17.4" width="2.4" height="1.6" fill="#b0b0b0"/><rect x="25" y="17.4" width="2.4" height="1.6" fill="#b0b0b0"/><rect x="28" y="24.6" width="28" height="10" fill="#1c1e28"/><rect x="35" y="24" width="3.4" height="1.4" fill="#f0c040"/>
<path d="M0 34 L24 34 Q26.4 34 28 32.4 L30.6 29.8 Q32.2 28.4 34.4 28.4 L65 28.4 Q69 28.4 69 32 L69 50.6 Q69 54.6 65 54.6 L4 54.6 Q0 54.6 0 50.6 Z" fill="url(#bf1)"/>
</svg>
<div class="t" style="left:1163px;top:460.8px;font-size:12.2px;font-weight:bold;letter-spacing:-.16px;line-height:16px;margin-top:-8px">Screenshots (16 items)</div>
<div class="abs" style="left:1163.5px;top:481.5px;width:207.5px;height:65px;border:1px solid #2f2f2f;border-radius:3.5px;background:#1d1d1d"></div>
<div class="abs" style="left:1173.7px;top:507.6px;width:12px;height:12px;border-radius:50%;background:#d0d0d0"></div>
<div class="abs" style="left:1179.2px;top:512.6px;width:1.2px;height:4px;background:#1b1b1b;"></div>
<div class="abs" style="left:1179.2px;top:510.4px;width:1.2px;height:1.3px;background:#1b1b1b;"></div>
<div class="t" style="left:1196.8px;top:499.6px;font-size:11.3px;letter-spacing:0;line-height:14px;margin-top:-7px">Select a single file to get more</div>
<div class="t" style="left:1196.8px;top:514.7px;font-size:11.3px;letter-spacing:0;line-height:14px;margin-top:-7px">information and share your</div>
<div class="t" style="left:1196.8px;top:529.8px;font-size:11.3px;letter-spacing:0;line-height:14px;margin-top:-7px">cloud content.</div>
<div class="abs" style="left:239px;top:772px;width:1149px;height:8px;background:#1f1f1f;"></div>
<div class="t n" style="left:250px;top:782px;">16 items</div>
<div class="abs" style="left:293.4px;top:777px;width:1px;height:6px;background:#bdbdbd;"></div>
<svg style="left:1348.5px;top:775.3px" width="12.5" height="5" viewBox="0 0 12.5 5"><rect x=".5" y=".5" width="11.5" height="6" rx="1" fill="none" stroke="#cfcfcf" stroke-width="1"/><rect x="1.5" y="1.2" width="9.5" height="1.6" fill="#8a8a8a"/></svg>
<div class="abs" style="left:1365px;top:772px;width:20px;height:8px;background:#4a4a4a;border:1px solid #6a6a6a;border-bottom:none"></div>
<svg style="left:1369px;top:775.3px" width="12.5" height="5" viewBox="0 0 12.5 5"><rect x=".5" y=".5" width="11.5" height="6" rx="1" fill="none" stroke="#e6e6e6" stroke-width="1"/><rect x="2.6" y="2" width="7.2" height="3" fill="#f2f2f2"/></svg>
<div class="abs" style="left:808px;top:192.5px;width:93.4px;height:124.6px;background:#2b2b2b;box-shadow:1.5px 1.5px 3px rgba(0,0,0,.55);border:0"></div>
<div class="abs" style="left:808px;top:192.5px;width:20.2px;height:124.6px;background:#383838;"></div>
<div class="abs" style="left:828.2px;top:192.5px;width:0.8px;height:124.6px;background:#242424;"></div>
<div class="abs" style="left:811px;top:196px;width:15.5px;height:15.2px;background:#5c5c5c;"></div>
<svg style="left:815px;top:200.2px" width="8" height="7" viewBox="0 0 8 7"><path d="M.8 3.6 L3 5.8 L7.2 1" fill="none" stroke="#b8b8b8" stroke-width="1.3"/></svg>
<div class="t g" style="left:833.8px;top:203.6px;color:#7c7c7c;letter-spacing:-.44px">All File Types</div>
<div class="t" style="left:833.8px;top:220.95px;">Word</div>
<div class="t" style="left:833.8px;top:238.3px;">Excel</div>
<div class="t" style="left:833.8px;top:255.65px;">PowerPoint</div>
<div class="t" style="left:833.8px;top:273px;">Images</div>
<div class="t" style="left:833.8px;top:290.35px;">Videos</div>
<div class="t" style="left:833.8px;top:307.7px;letter-spacing:-.9px">PDF</div>
</body></html>
